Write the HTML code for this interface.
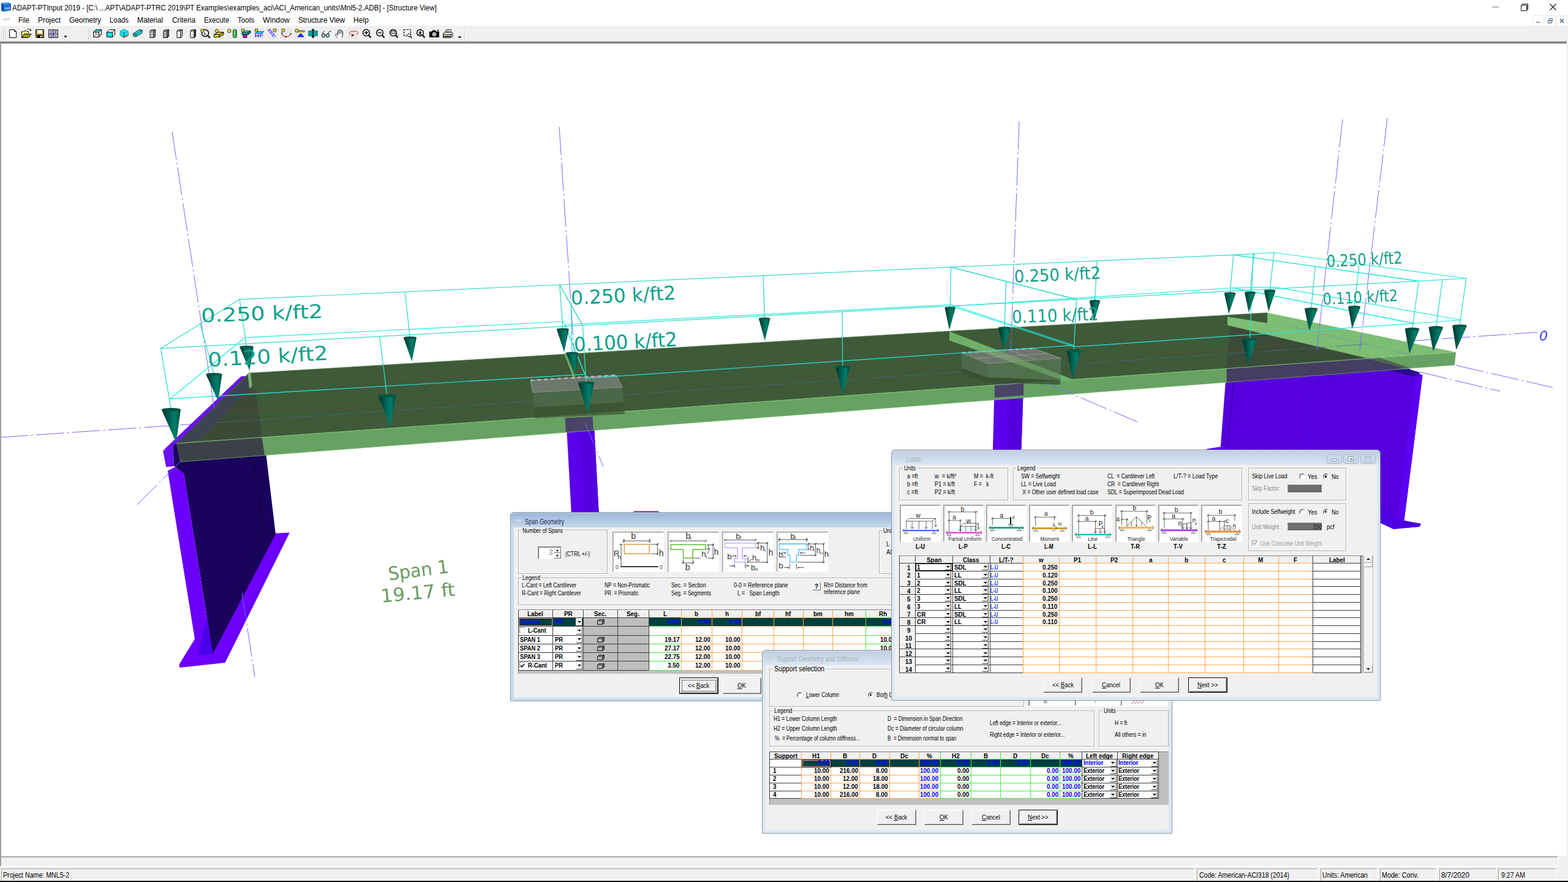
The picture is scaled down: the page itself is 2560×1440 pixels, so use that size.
<!DOCTYPE html>
<html lang="en"><head><meta charset="utf-8"><title>ADAPT-PTInput 2019</title>
<style>
html,body{margin:0;padding:0}
body{width:2560px;height:1440px;overflow:hidden;background:#fff;position:relative;font-family:"Liberation Sans",sans-serif;font-size:11px;color:#000}
.abs{position:absolute}
.t{position:absolute;white-space:pre;line-height:1.18}
u{text-decoration:underline}
</style></head>
<body>
<div class="abs" style="left:0;top:0;width:2560px;height:42px;background:#fff"></div>
<svg class="abs" style="left:1px;top:3px" width="18" height="17" viewBox="0 0 18 17"><path d="M1 2 L13 1 L17 3 L17 14 L5 16 L1 14 Z" fill="#1e6fd0"/><path d="M1 2 L13 1 L17 3 L5 4.5Z" fill="#4d9bf0"/><path d="M1 2L5 4.5L5 16L1 14Z" fill="#0d4fa8"/><text x="7" y="12" font-size="5" fill="#fff" font-family="Liberation Sans, sans-serif">pult</text></svg>
<span class="t " style="left:20px;top:5.5px;font-size:12px;color:#000;transform:scaleX(0.961);transform-origin:0 0;">ADAPT-PTInput 2019 - [C:\ ...APT\ADAPT-PTRC 2019\PT Examples\examples_aci\ACI_American_units\Mnl5-2.ADB] - [Structure View]</span>
<svg class="abs" style="left:2420px;top:0" width="140" height="22" viewBox="0 0 140 22"><path d="M16.5 11.5H27.5" stroke="#777" stroke-width="1"/><path d="M63.5 8.5H72.5V17.5H63.5Z" fill="#fff" stroke="#111" stroke-width="1"/><path d="M65.5 8.5V6.5H74.5V15.5H72.5" fill="none" stroke="#111" stroke-width="1"/><path d="M73 8L74 8L74 15L73 15Z" fill="#999"/><path d="M110.5 6.5L120.5 16.5M120.5 6.5L110.5 16.5" stroke="#111" stroke-width="1.1"/></svg>
<span class="t " style="left:30px;top:25.5px;font-size:12px;color:#000;transform:scaleX(0.931);transform-origin:0 0;">File</span>
<span class="t " style="left:62px;top:25.5px;font-size:12px;color:#000;letter-spacing:-0.05px;">Project</span>
<span class="t " style="left:113px;top:25.5px;font-size:12px;color:#000;letter-spacing:-0.09px;">Geometry</span>
<span class="t " style="left:179px;top:25.5px;font-size:12px;color:#000;transform:scaleX(0.948);transform-origin:0 0;">Loads</span>
<span class="t " style="left:224px;top:25.5px;font-size:12px;color:#000;letter-spacing:-0.08px;">Material</span>
<span class="t " style="left:281px;top:25.5px;font-size:12px;color:#000;letter-spacing:-0.08px;">Criteria</span>
<span class="t " style="left:333px;top:25.5px;font-size:12px;color:#000;transform:scaleX(0.946);transform-origin:0 0;">Execute</span>
<span class="t " style="left:388px;top:25.5px;font-size:12px;color:#000;transform:scaleX(0.964);transform-origin:0 0;">Tools</span>
<span class="t " style="left:429px;top:25.5px;font-size:12px;color:#000;transform:scaleX(1.031);transform-origin:0 0;">Window</span>
<span class="t " style="left:487px;top:25.5px;font-size:12px;color:#000;letter-spacing:-0.13px;">Structure View</span>
<span class="t " style="left:577px;top:25.5px;font-size:12px;color:#000;letter-spacing:0.08px;">Help</span>
<span class="t" style="left:6px;top:28px;font-size:6px;color:#aaa;font-style:italic">pult</span>
<div class="abs" style="left:2503px;top:25px;width:16px;height:16px;border:1px solid #e8e8e8;background:#fff"></div>
<div class="abs" style="left:2522px;top:25px;width:16px;height:16px;border:1px solid #e8e8e8;background:#fff"></div>
<div class="abs" style="left:2541px;top:25px;width:16px;height:16px;border:1px solid #e8e8e8;background:#fff"></div>
<svg class="abs" style="left:2503px;top:25px" width="57" height="18" viewBox="0 0 57 18"><path d="M5 11.5H11" stroke="#6b7c99" stroke-width="1.6"/><path d="M24.5 8.5H29.5V12.5H24.5Z M26.5 8V5.5H31.5V9.5H30" fill="none" stroke="#6b7c99" stroke-width="1.3"/><path d="M44 6L50 12M50 6L44 12" stroke="#6b7c99" stroke-width="1.8"/></svg>
<div class="abs" style="left:0;top:42px;width:2560px;height:26px;background:#f0f0f0"></div>
<div class="abs" style="left:0;top:67px;width:2558px;height:3.500px;background:linear-gradient(#d4d4d4,#909090 40%,#696969 80%,#8a8a8a)"></div>
<div class="abs" style="left:114px;top:44px;width:1px;height:23px;background:#fff"></div><div class="abs" style="left:113px;top:44px;width:1px;height:23px;background:#d8d8d8"></div>
<div class="abs" style="left:759px;top:44px;width:1px;height:23px;background:#fff"></div><div class="abs" style="left:758px;top:44px;width:1px;height:23px;background:#d8d8d8"></div>
<div class="abs" style="left:5px;top:46px;width:1px;height:20px;background:#c6c6c6"></div><div class="abs" style="left:6px;top:46px;width:1px;height:20px;background:#fff"></div><div class="abs" style="left:8px;top:46px;width:1px;height:20px;background:#c6c6c6"></div><div class="abs" style="left:9px;top:46px;width:1px;height:20px;background:#fff"></div>
<div class="abs" style="left:144px;top:46px;width:1px;height:20px;background:#c6c6c6"></div><div class="abs" style="left:145px;top:46px;width:1px;height:20px;background:#fff"></div><div class="abs" style="left:147px;top:46px;width:1px;height:20px;background:#c6c6c6"></div><div class="abs" style="left:148px;top:46px;width:1px;height:20px;background:#fff"></div>
<svg class="abs" style="left:0;top:43px" width="770" height="25" viewBox="0 43 770 25" shape-rendering="auto">
<path d="M15.5 48.5H23.5L26.5 51.5V61.5H15.5Z" fill="#fff" stroke="#000"/><path d="M23.5 48.5V51.5H26.5" fill="none" stroke="#000"/>
<path d="M35.5 61.5V51.5H38L39 50.5H43L44 51.5H46.5V54" fill="#f4f08a" stroke="#000"/><path d="M35.5 61.5L39.5 55.5H51L46.5 61.5Z" fill="#a89a10" stroke="#000"/><path d="M44 48.5C46 46.5 48.5 47 49.5 49.5" fill="none" stroke="#000"/><path d="M48 49L50.5 51L51 47.8Z" fill="#000"/>
<path d="M58.5 48.5H71.5V61.5H59.5L58.5 60.5Z" fill="#9a8c10" stroke="#000"/><rect x="61" y="49" width="8" height="6" fill="#fff"/><rect x="61" y="57" width="8" height="4.5" fill="#000"/><rect x="66" y="58" width="2" height="3" fill="#fff"/>
<rect x="79.5" y="48.5" width="15" height="13" fill="#c8c8c8" stroke="#222"/><path d="M87 48.5V61.5M79.5 55.5H94.5" stroke="#222" stroke-width="1.2"/>
<g font-family="Liberation Sans, sans-serif" font-size="6" font-weight="bold" fill="#1a1aff"><text x="81.5" y="54.3">1</text><text x="89" y="54.3">2</text><text x="81.5" y="61">3</text><text x="89" y="60.5">=</text></g>
<path d="M104 58.5H110L107 61.5Z" fill="#000"/>
<path d="M152.5 52.5H161.5V60.5H152.5Z" fill="#e8e8e8" stroke="#000"/><path d="M152.5 52.5L156.5 48.5H165.5L161.5 52.5Z" fill="#20e0e0" stroke="#000"/><path d="M161.5 52.5L165.5 48.5V56.5L161.5 60.5Z" fill="#e8e8e8" stroke="#000"/><path d="M156.5 48.5V56.5H165.5M156.5 56.5L152.5 60.5" fill="none" stroke="#555" stroke-width=".8"/>
<path d="M174.5 52.5H183.5V60.5H174.5Z" fill="#20e0e0" stroke="#000"/><path d="M174.5 52.5L178.5 48.5H187.5L183.5 52.5Z" fill="#fff" stroke="#000"/><path d="M183.5 52.5L187.5 48.5V56.5L183.5 60.5Z" fill="#fff" stroke="#000"/>
<path d="M202.500 47.500L209.400 51.200V57.500L202.500 61.200L196 57.500V51.200Z" fill="#18e4e4" stroke="#0a9a9a" stroke-width=".8"/><path d="M202.500 53.800V61" stroke="#1a1aff" stroke-width="1.300"/><path d="M202.500 53.800L196 51.200M202.500 53.800L209.400 51.200" stroke="#0a9a9a" stroke-width=".8"/><path d="M196 57.600L202.500 61.300" stroke="#10c010" stroke-width="1.200"/><path d="M209.400 57.600L202.500 61.300" stroke="#e01010" stroke-width="1.200"/>
<path d="M217.500 55L227.500 48.200L231.900 49.400V53.800L221.900 60L217.500 58.800Z" fill="#18e4e4" stroke="#000" stroke-width=".9"/><path d="M217.500 55L221.900 56.200V60M221.900 56.200L231.900 49.400" fill="none" stroke="#000" stroke-width=".9"/>
<path d="M245.0 50.5H251.0V61.5H245.0Z" fill="#fff" stroke="#000"/><path d="M245.0 50.5L247.5 48.5H253.5L251.0 50.5Z" fill="#fff" stroke="#000"/><path d="M251.0 50.5L253.5 48.5V59.5L251.0 61.5Z" fill="#aaa" stroke="#000"/>
<path d="M247 52.5H249V59.5H247Z" fill="none" stroke="#555" stroke-width=".8"/>
<path d="M267.0 50.5H273.0V61.5H267.0Z" fill="#b0b0b0" stroke="#000"/><path d="M267.0 50.5L269.5 48.5H275.5L273.0 50.5Z" fill="#fff" stroke="#000"/><path d="M273.0 50.5L275.5 48.5V59.5L273.0 61.5Z" fill="#888" stroke="#000"/>
<path d="M289.0 50.5H295.0V61.5H289.0Z" fill="#fff" stroke="#000"/><path d="M289.0 50.5L291.5 48.5H297.5L295.0 50.5Z" fill="#fff" stroke="#000"/><path d="M295.0 50.5L297.5 48.5V59.5L295.0 61.5Z" fill="#fff" stroke="#000"/>
<path d="M311.0 50.5H317.0V61.5H311.0Z" fill="#fff" stroke="#000"/><path d="M311.0 50.5L313.5 48.5H319.5L317.0 50.5Z" fill="#fff" stroke="#000"/><path d="M317.0 50.5L319.5 48.5V59.5L317.0 61.5Z" fill="#555" stroke="#000"/>
<rect x="326" y="46" width="18" height="17" fill="#e2e2e2" opacity=".55"/>
<rect x="348" y="46" width="18" height="17" fill="#e2e2e2" opacity=".55"/>
<rect x="370" y="46" width="18" height="17" fill="#e2e2e2" opacity=".55"/>
<rect x="392" y="46" width="18" height="17" fill="#e2e2e2" opacity=".55"/>
<rect x="414" y="46" width="18" height="17" fill="#e2e2e2" opacity=".55"/>
<rect x="436" y="46" width="18" height="17" fill="#e2e2e2" opacity=".55"/>
<rect x="458" y="46" width="18" height="17" fill="#e2e2e2" opacity=".55"/>
<rect x="480" y="46" width="18" height="17" fill="#e2e2e2" opacity=".55"/>
<rect x="568" y="46" width="18" height="17" fill="#e2e2e2" opacity=".55"/>
<circle cx="335" cy="54" r="5.5" fill="#fff" stroke="#000" stroke-width="1.6"/><path d="M339 58L343 62" stroke="#000" stroke-width="2"/><circle cx="330.5" cy="50" r="2.6" fill="#f4ec1a" stroke="#111" stroke-width=".9"/><path d="M334 52V56H337" fill="none" stroke="#000"/>
<path d="M349.5 56.5L357 52.5H365L358 56.5Z" fill="#f4e81a" stroke="#000"/><path d="M349.5 56.5H358V60.5H349.5Z" fill="#f4e81a" stroke="#000"/><path d="M358 56.5L365 52.5V56.5L358 60.5Z" fill="#c8b810" stroke="#000"/><circle cx="354" cy="50.5" r="2.6" fill="#f4ec1a" stroke="#111" stroke-width=".9"/>
<rect x="380.600" y="48.500" width="5.600" height="12.800" rx="1.800" fill="#5ce070" stroke="#000" stroke-width=".9"/><path d="M384.500 50V60" stroke="#208a30" stroke-width="1"/><circle cx="374.400" cy="50.600" r="2.700" fill="#f4ec1a" stroke="#111" stroke-width=".9"/>
<path d="M395 53.5L399 50.5H409L405 53.5Z" fill="#20e0e0" stroke="#000" stroke-width=".8"/><path d="M395 53.5H405V56.5H395Z" fill="#1ab0b0" stroke="#000" stroke-width=".8"/><path d="M405 53.5L409 50.5V53.5L405 56.5Z" fill="#0a8080" stroke="#000" stroke-width=".8"/><rect x="397" y="57" width="6" height="4.5" fill="#d010d0" stroke="#000" stroke-width=".8"/><circle cx="396.5" cy="49.5" r="2.4" fill="#f4ec1a" stroke="#111" stroke-width=".9"/>
<path d="M416 54.5L421 51.5H431L426 54.5Z" fill="#20e0e0" stroke="#1a1aff" stroke-width=".8"/><path d="M417.5 55V61M421.5 55V61M425.5 55V61M416 58.5H426M428 53V59" stroke="#1a1aff" stroke-width="1"/><circle cx="418.5" cy="49.5" r="2.4" fill="#f4ec1a" stroke="#111" stroke-width=".9"/>
<path d="M437 48L447 61M440 47L450 60M438.5 50L441.5 48M441.5 54L444.5 52M444.5 58L447.5 56" stroke="#1a1aff" stroke-width="1"/><circle cx="448.5" cy="49.5" r="2.6" fill="#f4ec1a" stroke="#111" stroke-width=".9"/>
<path d="M460 54C463 62 471 62 475 55" fill="none" stroke="#d02010" stroke-width="1.1"/><circle cx="462.5" cy="49.5" r="2.6" fill="#f4ec1a" stroke="#111" stroke-width=".9"/><circle cx="460" cy="54" r="1" fill="#000"/><circle cx="467" cy="60" r="1" fill="#000"/><circle cx="475" cy="55" r="1" fill="#000"/>
<path d="M486 50.5H498" stroke="#222" stroke-width="1.2"/><path d="M484 52.5H498" stroke="#c8a800" stroke-width="1"/><path d="M491 54L497 60.5H485Z" fill="#1a1aff"/><circle cx="484.5" cy="50" r="2.6" fill="#f4ec1a" stroke="#111" stroke-width=".9"/>
<rect x="503" y="50" width="16" height="9" fill="#109090"/><path d="M503 53H519M503 56H519" stroke="#20c0c0" stroke-width=".7"/><path d="M511 46.5L514 50H508Z M511 62.5L514 59H508Z" fill="#000"/><path d="M511 49V60" stroke="#000" stroke-width="1.4"/>
<circle cx="528" cy="58" r="2.8" fill="#9ef0f0" stroke="#000"/><circle cx="535" cy="58" r="2.8" fill="#9ef0f0" stroke="#000"/><path d="M526 56L529 50.5M536 55.5C536 51 540 50 541 52" fill="none" stroke="#000"/>
<path d="M550.5 61.5C548 58 547 56 548.5 55.5C550 55 550.5 56.5 551.5 57.5V50.5C551.5 49 553.5 49 553.5 50.5V49.5C553.5 48 555.5 48 555.5 49.5V50C555.5 48.7 557.5 48.7 557.5 50.2V51.5C557.5 50.2 559.5 50.4 559.5 52V57C559.5 59 558.5 60 558 61.5" fill="#fff" stroke="#000" stroke-width=".9"/><path d="M553.5 50.5V55M555.5 50V55M557.5 51.5V55" stroke="#000" stroke-width=".7"/>
<path d="M572 57C568 54 572 51 578 51C584 51 587 54 582 56.5" fill="none" stroke="#d02010" stroke-width="1"/><path d="M574 55L579 57.5L574 60Z" fill="#a01010"/>
<circle cx="598" cy="53.5" r="5.3" fill="#fff" stroke="#000" stroke-width="1.5"/><path d="M602 57.5L605.5 61.5" stroke="#000" stroke-width="2"/>
<path d="M595 53.5H601M598 50.5V56.5" stroke="#000" stroke-width="1.5"/>
<circle cx="620" cy="53.5" r="5.3" fill="#fff" stroke="#000" stroke-width="1.5"/><path d="M624 57.5L627.5 61.5" stroke="#000" stroke-width="2"/>
<path d="M617 53.5H623" stroke="#000" stroke-width="1.5"/>
<circle cx="642" cy="53.5" r="5.3" fill="#fff" stroke="#000" stroke-width="1.5"/><path d="M646 57.5L649.5 61.5" stroke="#000" stroke-width="2"/>
<rect x="639" y="50.5" width="6" height="4" fill="#ddd" stroke="#000" stroke-width=".8"/>
<path d="M659.5 48.500H670.5V58.5H659.5Z" fill="none" stroke="#000" stroke-width="1.2" stroke-dasharray="3 1.5"/><circle cx="668" cy="57.500" r="2.5" fill="#fff" stroke="#000"/><path d="M670 59.5L672.5 62" stroke="#000" stroke-width="1.6"/>
<circle cx="686" cy="53.5" r="5.3" fill="#fff" stroke="#000" stroke-width="1.5"/><path d="M690 57.5L693.5 61.5" stroke="#000" stroke-width="2"/>
<path d="M686 49.500V54.5M683.800 52.5L686 55L688.200 52.5M683 56.500H689" stroke="#000" stroke-width="1.2" fill="none"/>
<path d="M701 51.500H705L706 49.500H711L712 51.500H717V61H701Z" fill="#000"/><circle cx="709" cy="56" r="3" fill="#aaa" stroke="#fff" stroke-width=".8"/><rect x="714" y="48.500" width="2" height="2" fill="#000"/>
<path d="M726.5 53.5L728.500 48.500H736.500L735.500 53.500Z" fill="#fff" stroke="#000" stroke-width=".8"/><path d="M728.5 50H734M728 51.500H734" stroke="#555" stroke-width=".6"/><path d="M723.500 54.5L726.500 52.5H737.500L739 54.500V59L736 61.500H723.500Z" fill="#d8d8d8" stroke="#000" stroke-width=".9"/><path d="M723.500 56.500H736L739 54.5M736 56.500V61.500" fill="none" stroke="#000" stroke-width=".8"/><rect x="728" y="57.500" width="3" height="1.300" fill="#d8c010"/><path d="M724 59.500H735.500" stroke="#000" stroke-width="1.5"/>
<path d="M747.5 59.500H753.500L750.500 62.500Z" fill="#000"/>
</svg>
<div class="abs" style="left:0;top:70px;width:2px;height:1344px;background:#a0a0a0;z-index:2"></div>
<div class="abs" style="left:0;top:1397px;width:2560px;height:43px;background:#f0f0f0"></div>
<div class="abs" style="left:2px;top:1398.400px;width:2541px;height:1.600px;background:#adadad"></div>
<div class="abs" style="left:2543px;top:1398px;width:2px;height:16px;background:#fbfbfb"></div>
<div class="abs" style="left:0;top:1412.500px;width:2545px;height:2px;background:#fbfbfb"></div>
<div class="abs" style="left:2558px;top:71px;width:1px;height:1327px;background:#e9e9e9"></div><div class="abs" style="left:2559px;top:68px;width:1px;height:1330px;background:#f4f4f4"></div>
<div class="abs" style="left:0;top:1438px;width:2560px;height:2px;background:#1a1a1a"></div>
<div class="abs" style="left:2px;top:1417.500px;width:1948px;height:20.500px;box-sizing:border-box;border-left:1px solid #a0a0a0;border-top:1px solid #a0a0a0;border-right:1px solid #fff"></div>
<div class="abs" style="left:1954px;top:1417.500px;width:197px;height:20.500px;box-sizing:border-box;border-left:1px solid #a0a0a0;border-top:1px solid #a0a0a0;border-right:1px solid #fff"></div>
<div class="abs" style="left:2155.5px;top:1417.500px;width:93.0px;height:20.500px;box-sizing:border-box;border-left:1px solid #a0a0a0;border-top:1px solid #a0a0a0;border-right:1px solid #fff"></div>
<div class="abs" style="left:2252.5px;top:1417.500px;width:92.5px;height:20.500px;box-sizing:border-box;border-left:1px solid #a0a0a0;border-top:1px solid #a0a0a0;border-right:1px solid #fff"></div>
<div class="abs" style="left:2349.5px;top:1417.500px;width:93.0px;height:20.500px;box-sizing:border-box;border-left:1px solid #a0a0a0;border-top:1px solid #a0a0a0;border-right:1px solid #fff"></div>
<div class="abs" style="left:2446px;top:1417.500px;width:94px;height:20.500px;box-sizing:border-box;border-left:1px solid #a0a0a0;border-top:1px solid #a0a0a0;border-right:1px solid #fff"></div>
<span class="t " style="left:4.5px;top:1421.5px;font-size:12.5px;color:#000;transform:scaleX(0.850);transform-origin:0 0;">Project Name: MNL5-2</span>
<span class="t " style="left:1958px;top:1421.5px;font-size:12.5px;color:#000;transform:scaleX(0.843);transform-origin:0 0;">Code: American-ACI318 (2014)</span>
<span class="t " style="left:2159px;top:1421.5px;font-size:12.5px;color:#000;transform:scaleX(0.845);transform-origin:0 0;">Units: American</span>
<span class="t " style="left:2256px;top:1421.5px;font-size:12.5px;color:#000;transform:scaleX(0.858);transform-origin:0 0;">Mode: Conv.</span>
<span class="t " style="left:2353px;top:1421.5px;font-size:12.5px;color:#000;transform:scaleX(0.945);transform-origin:0 0;">8/7/2020</span>
<span class="t " style="left:2450.5px;top:1421.5px;font-size:12.5px;color:#000;transform:scaleX(0.850);transform-origin:0 0;">9:27 AM</span>
<svg class="abs" style="left:0;top:0" width="2560" height="1440" viewBox="0 0 2560 1440">
<defs><linearGradient id="cg" x1="0" x2="1" y1="0" y2="0"><stop offset="0" stop-color="#003028"/><stop offset=".5" stop-color="#006c5c"/><stop offset=".72" stop-color="#007e6a"/><stop offset="1" stop-color="#00463a"/></linearGradient><linearGradient id="cgd" x1="0" x2="1" y1="0" y2="0"><stop offset="0" stop-color="#002822"/><stop offset=".55" stop-color="#005548"/><stop offset="1" stop-color="#002a24"/></linearGradient></defs>
<line x1="0" y1="714" x2="2510" y2="542.5" stroke="#6a6aff" stroke-width="1" stroke-dasharray="46 5 3 5"/>
<polygon points="293,1084 293,1090 367.5,1082 473,869.5 423,872" fill="#6e00ff" />
<polyline points="296,1084 366,1078 469,871" fill="none" stroke="#3a00a0" stroke-width="0.7" />
<polygon points="284,726 434,738 450,872 347.5,1067.5 300,773 285,762" fill="#1a035c" />
<polygon points="273.8,768.8 285,762.5 300,772.5 347.5,1067.5 322.5,1071.2" fill="#6a00fa" />
<polygon points="322.5,1071 347.5,1067.5 345,1050 337,1013" fill="#4a00e8" />
<polyline points="413.8,746 431.5,872 344,1050" fill="none" stroke="#0c0238" stroke-width="0.8" />
<polyline points="418,874 450,872" fill="none" stroke="#0c0238" stroke-width="0.8" />
<polygon points="266.2,736.2 282.5,725 283.8,761.2 271.2,762.5" fill="#6a10f5" />
<polygon points="282.5,725 293,723 294,754 283.8,761.2" fill="#1c0560" />
<polygon points="393.5,614.5 405,613.6 288,724 266.2,735.4" fill="#6a10f5" />
<polygon points="923.8,675 968.8,673.8 977.6,836 932.7,836" fill="#5a00ea" />
<polygon points="946.2,675 968.8,673.8 977.6,836 955,836" fill="#5200e0" />
<polygon points="1623.8,626.2 1671.2,623.8 1667.4,736 1620.9,736" fill="#5a00ea" />
<polygon points="1650,626.2 1671.2,623.8 1667.4,736 1645,736" fill="#5200e0" />
<polygon points="2002.6,601 2296,600 2322.5,612.5 2292.5,850 2320,855 2317.5,860 2275,863.8 2250,852 2250,740 1992,740" fill="#5500dd" />
<polygon points="2310,615 2322.5,612.5 2292.5,850 2281,846" fill="#5c00f2" />
<polygon points="2250,828 2281,846 2292.5,850 2320,855 2317.5,860 2275,863.8 2250,852" fill="#5000e6" />
<polyline points="2253,836 2278,850 2308,856" fill="none" stroke="#3000a0" stroke-width="0.7" />
<polyline points="2014,625 2004,736" fill="none" stroke="#2a0080" stroke-width="0.8" />
<polyline points="2145,615 2132,740" fill="none" stroke="#4a10e8" stroke-width="0.8" />
<polygon points="1970,733 1995,729 2010,732 2010,740 1970,740" fill="#5a00f0" />
<polygon points="406,609 1550,540.5 2069,510.5 2069,527.5 2230,584.6 2377,575 288,724" fill="#3e5a38" />
<polygon points="288,724 2377,575 2375,596 294,754" fill="#67a262" />
<polygon points="2004,517 2069,527.5 2069,510.5 2377,575 2230,584.6 2004,531" fill="#7dbd74" />
<polygon points="921,577.3 924.5,576.6 940.5,619 937,620" fill="#6aa864" />
<polygon points="1550,541 1750,619 1734,620.5 1550,556" fill="#6fae68" />
<polygon points="404.4,613.5 407.2,634.4 328,718.5 288,724" fill="#3d4350" />
<polygon points="407.2,634.4 417,636 427.4,710.8 420,714.5 328,720.6" fill="#3b4a37" />
<polygon points="288,724 427.4,714 432.2,743.5 294,754" fill="#3b4146" />
<polygon points="404.4,609.4 409.3,608.5 411.4,630.3 407.2,634.4" fill="#7ab870" />
<polygon points="922.5,682.5 967.5,680 968.8,703 923.8,705.5" fill="#4a4468" />
<polygon points="1623.8,626.2 1671.2,623.8 1671.2,645.5 1623.8,649.2" fill="#4a4468" />
<polygon points="2002.6,601.5 2230,584.6 2294,601 2266,604.6 2002.6,624.6" fill="#463d62" />
<polygon points="2010,533 2230,584.6 2002.6,601.5 2005,560" fill="#3a4c38" />
<polygon points="2230,584.6 2294,601 2302,600.5 2250,583.5" fill="#4d6650" />
<polygon points="2266.5,604.6 2297.8,602 2318.6,608 2310,615" fill="#2a0a90" />
<line x1="406" y1="609" x2="1550" y2="540.5" stroke="#6d9c66" stroke-width="0.8" />
<line x1="1550" y1="540.5" x2="2069" y2="510.5" stroke="#6d9c66" stroke-width="0.8" />
<polygon points="1035,834.5 1075,834.5 1076,836.5 1034,836.5" fill="#6a10f5" />
<line x1="288" y1="724" x2="2377" y2="575" stroke="#7fc878" stroke-width="1" />
<line x1="294" y1="754" x2="2375" y2="596" stroke="#84d07c" stroke-width="0.8" opacity=".7"/>
<line x1="355" y1="690" x2="2230" y2="562" stroke="#4a6a8a" stroke-width="1" stroke-dasharray="46 5 3 5" opacity=".8"/>
<polyline points="355,666 415,668.5 475,668.8 550,667.5 625,665 730,657 840,647.5 870,641 940,631 1017,626 1100,623.5 1200,621 1300,618.5 1400,614.5 1460,608 1512,600 1575,592.5 1650,588 1732,585 1820,582 1900,578 1980,573.5 2040,570 2100,560" fill="none" stroke="#8a4030" stroke-width="0.8" opacity=".6" stroke-linejoin="round"/>
<polygon points="866,621 1006,612.5 1016,632.5 870,641" fill="#7b7f7b" opacity=".78"/>
<polyline points="866,621 1006,612.5 1016,632.5 870,641 866,621" fill="none" stroke="#a8a8a8" stroke-width="0.8" />
<path d="M866 621L1006 612.500" stroke="#b8b8b8" stroke-width="2.5" stroke-dasharray="6 5"/>
<polygon points="870,641 1016,632.5 1018,657 872,665" fill="#506c4d" opacity=".7"/>
<polygon points="872,665 1018,657 1020,676 873,683" fill="#3a5335" opacity=".7"/>
<polygon points="1570,576 1687.5,568.8 1732.5,585 1612.5,593.8" fill="#7b7f7b" opacity=".78"/>
<path d="M1570 576L1687.500 568.800" stroke="#b0b0b0" stroke-width="2.500" stroke-dasharray="6 5"/>
<polyline points="1570,576 1687.5,568.8 1732.5,585 1612.5,593.8 1570,576" fill="none" stroke="#a8a8a8" stroke-width="0.8" />
<polyline points="1609,573.6 1652,589.5" fill="none" stroke="#a0a0a0" stroke-width="0.7" />
<polyline points="1648,571.2 1692,587.5" fill="none" stroke="#a0a0a0" stroke-width="0.7" />
<polyline points="1591,585 1710,577" fill="none" stroke="#a0a0a0" stroke-width="0.7" />
<polygon points="1570,576 1612.5,593.8 1611,616 1570,601" fill="#536f50" opacity=".75"/>
<polygon points="1612.5,593.8 1732.5,585 1731,621 1611,616" fill="#5a7856" opacity=".75"/>
<polygon points="1570,601 1611,616 1731,621 1731,628 1611,624 1570,610" fill="#36502f" opacity=".8"/>
<polygon points="1573,550.5 1750,619 1734,620.5 1573,563.5" fill="#74b46c" opacity=".38"/>
<line x1="281" y1="215" x2="350" y2="668" stroke="#6a6aff" stroke-width="1" stroke-dasharray="46 5 3 5"/>
<line x1="395" y1="968" x2="416" y2="1105" stroke="#6a6aff" stroke-width="1" stroke-dasharray="46 5 3 5"/>
<line x1="913" y1="207" x2="939" y2="600" stroke="#6a6aff" stroke-width="1" stroke-dasharray="46 5 3 5"/>
<line x1="955" y1="690" x2="985" y2="762" stroke="#6a6aff" stroke-width="1" stroke-dasharray="46 5 3 5"/>
<line x1="1664" y1="198" x2="1650" y2="577" stroke="#6a6aff" stroke-width="1" stroke-dasharray="46 5 3 5"/>
<line x1="1710" y1="626" x2="1857.5" y2="689" stroke="#6a6aff" stroke-width="1" stroke-dasharray="46 5 3 5"/>
<line x1="2192" y1="195" x2="2150" y2="572" stroke="#6a6aff" stroke-width="1" stroke-dasharray="46 5 3 5"/>
<line x1="2265" y1="193" x2="2220" y2="572.5" stroke="#6a6aff" stroke-width="1" stroke-dasharray="46 5 3 5"/>
<line x1="224" y1="824" x2="300" y2="748" stroke="#6a6aff" stroke-width="1" stroke-dasharray="46 5 3 5"/>
<line x1="2377" y1="596.5" x2="2535" y2="632.6" stroke="#6a6aff" stroke-width="1" stroke-dasharray="46 5 3 5"/>
<line x1="2100" y1="531" x2="2377" y2="596.5" stroke="#6f8fb0" stroke-width="1" stroke-dasharray="46 5 3 5" opacity=".75"/>
<line x1="2318" y1="607.3" x2="2449" y2="638.8" stroke="#6a6aff" stroke-width="1" stroke-dasharray="46 5 3 5"/>
<text x="2513" y="556" font-family="DejaVu Sans, sans-serif" font-style="italic" font-size="22" fill="#3a3aff" textLength="14" lengthAdjust="spacingAndGlyphs">0</text>
<g stroke-linecap="round">
<polygon points="391.2,488.8 913.8,465 951.2,531.2 262.5,568.8" fill="none" stroke="#33dcc6" stroke-width="1.2"/>
<polygon points="913.8,465 1552.5,436.2 1757.5,488.8 951.2,531.2" fill="none" stroke="#33dcc6" stroke-width="1.2"/>
<polygon points="1552.5,436.2 2013.8,416.2 2316.2,458.8 1757.5,488.8" fill="none" stroke="#33dcc6" stroke-width="1.2"/>
<polygon points="2013.8,416.2 2080,412.5 2393.8,454.5 2316.2,458.8" fill="none" stroke="#22e8e0" stroke-width="1.2"/>
<polygon points="400,551.2 920,525 955,611.2 277.5,651.2" fill="none" stroke="#22e8e0" stroke-width="1.2"/>
<polygon points="922.5,530 1552.5,497.5 1752.5,563.8 957.5,617.5" fill="none" stroke="#22e8e0" stroke-width="1.2"/>
<polygon points="1553.8,500 2012.5,470 2308.8,528 1753.8,566.2" fill="none" stroke="#22e8e0" stroke-width="1.2"/>
<polygon points="2012.5,470 2082.5,468.8 2386.2,522.5 2308.8,528" fill="none" stroke="#22e8e0" stroke-width="1.2"/>
<line x1="262.5" y1="568.8" x2="279.4" y2="668.8" stroke="#33dcc6" stroke-width="1.3"/>
<line x1="326.8" y1="528.8" x2="349.35" y2="611.2" stroke="#33dcc6" stroke-width="1.3"/>
<line x1="391.2" y1="488.8" x2="402.5" y2="566.2" stroke="#33dcc6" stroke-width="1.3"/>
<line x1="620" y1="550" x2="631.85" y2="646.2" stroke="#33dcc6" stroke-width="1.3"/>
<line x1="661.2" y1="477.5" x2="669.4" y2="551.2" stroke="#33dcc6" stroke-width="1.3"/>
<line x1="913.8" y1="465" x2="918.8" y2="537.5" stroke="#33dcc6" stroke-width="1.3"/>
<line x1="932.5" y1="498" x2="933.8" y2="576.2" stroke="#33dcc6" stroke-width="1.3"/>
<line x1="951.2" y1="531.2" x2="956.9" y2="625" stroke="#33dcc6" stroke-width="1.3"/>
<line x1="1246.2" y1="450" x2="1248.15" y2="520" stroke="#33dcc6" stroke-width="1.3"/>
<line x1="1375" y1="510" x2="1375.65" y2="598.8" stroke="#33dcc6" stroke-width="1.3"/>
<line x1="1552.5" y1="436.2" x2="1551.25" y2="502.5" stroke="#33dcc6" stroke-width="1.3"/>
<line x1="1642.5" y1="460" x2="1640" y2="535" stroke="#33dcc6" stroke-width="1.3"/>
<line x1="1757.5" y1="488.8" x2="1753.1" y2="572.5" stroke="#33dcc6" stroke-width="1.3"/>
<line x1="1791.2" y1="426.2" x2="1787.5" y2="491.2" stroke="#33dcc6" stroke-width="1.3"/>
<line x1="2013.8" y1="416.2" x2="2008.15" y2="478.8" stroke="#33dcc6" stroke-width="1.3"/>
<line x1="2047.5" y1="413.8" x2="2041" y2="477.5" stroke="#33dcc6" stroke-width="1.3"/>
<line x1="2080" y1="412.5" x2="2073.15" y2="474.5" stroke="#33dcc6" stroke-width="1.3"/>
<line x1="2147.5" y1="435" x2="2140.6" y2="504.2" stroke="#33dcc6" stroke-width="1.3"/>
<line x1="2218.8" y1="433.8" x2="2211.2" y2="500.8" stroke="#33dcc6" stroke-width="1.3"/>
<line x1="2316.2" y1="458.8" x2="2305.65" y2="537" stroke="#33dcc6" stroke-width="1.3"/>
<line x1="2355" y1="456.2" x2="2344.35" y2="534.5" stroke="#33dcc6" stroke-width="1.3"/>
<line x1="2393.8" y1="454.5" x2="2383.1" y2="531.8" stroke="#33dcc6" stroke-width="1.3"/>
<line x1="2046.2" y1="415" x2="2040.65" y2="553.8" stroke="#33dcc6" stroke-width="1.3"/>
<path d="M263.8 668.8L287.5 722.5L295 668.8Z" fill="url(#cg)"/>
<ellipse cx="279.4" cy="668.8" rx="15.6" ry="2.808" fill="#005446"/>
<path d="M336.2 611.2L356.2 655L362.5 611.2Z" fill="url(#cg)"/>
<ellipse cx="349.35" cy="611.2" rx="13.15" ry="2.367" fill="#005446"/>
<path d="M391.2 566.2L407.5 605L413.8 566.2Z" fill="url(#cg)"/>
<ellipse cx="402.5" cy="566.2" rx="11.3" ry="2.034" fill="#005446"/>
<path d="M617.5 646.2L637.5 697.5L646.2 646.2Z" fill="url(#cg)"/>
<ellipse cx="631.85" cy="646.2" rx="14.35" ry="2.583" fill="#005446"/>
<path d="M658.8 551.2L672.5 590L680 551.2Z" fill="url(#cg)"/>
<ellipse cx="669.4" cy="551.2" rx="10.6" ry="1.908" fill="#005446"/>
<path d="M908.8 537.5L921.2 575L928.8 537.5Z" fill="url(#cg)"/>
<ellipse cx="918.8" cy="537.5" rx="10" ry="1.8" fill="#005446"/>
<path d="M923.8 576.2L940 610L943.8 576.2Z" fill="url(#cg)"/>
<ellipse cx="933.8" cy="576.2" rx="10" ry="1.8" fill="#005446"/>
<path d="M943.8 625L960 675L970 625Z" fill="url(#cg)"/>
<ellipse cx="956.9" cy="625" rx="13.1" ry="2.358" fill="#005446"/>
<path d="M1238.8 520L1248.8 556.2L1257.5 520Z" fill="url(#cg)"/>
<ellipse cx="1248.15" cy="520" rx="9.35" ry="1.683" fill="#005446"/>
<path d="M1363.8 598.8L1376.2 643.8L1387.5 598.8Z" fill="url(#cg)"/>
<ellipse cx="1375.65" cy="598.8" rx="11.85" ry="2.133" fill="#005446"/>
<path d="M1542.5 502.5L1550 538.8L1560 502.5Z" fill="url(#cg)"/>
<ellipse cx="1551.25" cy="502.5" rx="8.75" ry="1.6" fill="#005446"/>
<path d="M1630 535L1638.8 572.5L1650 535Z" fill="url(#cg)"/>
<ellipse cx="1640" cy="535" rx="10" ry="1.8" fill="#005446"/>
<path d="M1741.2 572.5L1751.2 617.5L1765 572.5Z" fill="url(#cg)"/>
<ellipse cx="1753.1" cy="572.5" rx="11.9" ry="2.142" fill="#005446"/>
<path d="M1778.8 491.2L1786.2 525L1796.2 491.2Z" fill="url(#cg)"/>
<ellipse cx="1787.5" cy="491.2" rx="8.7" ry="1.6" fill="#005446"/>
<path d="M1998.8 478.8L2006.2 512.5L2017.5 478.8Z" fill="url(#cg)"/>
<ellipse cx="2008.15" cy="478.8" rx="9.35" ry="1.683" fill="#005446"/>
<path d="M2032 477.5L2038.8 510L2050 477.5Z" fill="url(#cg)"/>
<ellipse cx="2041" cy="477.5" rx="9" ry="1.62" fill="#005446"/>
<path d="M2063.8 474.5L2071.2 508.8L2082.5 474.5Z" fill="url(#cg)"/>
<ellipse cx="2073.15" cy="474.5" rx="9.35" ry="1.683" fill="#005446"/>
<path d="M2130 504.2L2137.5 540L2151.2 504.2Z" fill="url(#cg)"/>
<ellipse cx="2140.6" cy="504.2" rx="10.6" ry="1.908" fill="#005446"/>
<path d="M2201.2 500.8L2207.5 536.2L2221.2 500.8Z" fill="url(#cg)"/>
<ellipse cx="2211.2" cy="500.8" rx="10" ry="1.8" fill="#005446"/>
<path d="M2293.8 537L2301.2 577.5L2317.5 537Z" fill="url(#cg)"/>
<ellipse cx="2305.65" cy="537" rx="11.85" ry="2.133" fill="#005446"/>
<path d="M2332.5 534.5L2340 573.8L2356.2 534.5Z" fill="url(#cg)"/>
<ellipse cx="2344.35" cy="534.5" rx="11.85" ry="2.133" fill="#005446"/>
<path d="M2371.2 531.8L2377.5 571.2L2395 531.8Z" fill="url(#cg)"/>
<ellipse cx="2383.1" cy="531.8" rx="11.9" ry="2.142" fill="#005446"/>
<path d="M2028.8 553.8L2037 595L2052.5 553.8Z" fill="url(#cg)"/>
<ellipse cx="2040.65" cy="553.8" rx="11.85" ry="2.133" fill="#005446"/>
</g>
<text transform="translate(328.8 526.2) rotate(-2.13)" font-family="DejaVu Sans, sans-serif" font-size="31" fill="#10a08c" textLength="198.8" lengthAdjust="spacingAndGlyphs">0.250 k/ft2</text>
<text transform="translate(340 598.8) rotate(-3.30)" font-family="DejaVu Sans, sans-serif" font-size="32" fill="#10a08c" textLength="196.5" lengthAdjust="spacingAndGlyphs">0.120 k/ft2</text>
<text transform="translate(932.5 497.5) rotate(-2.91)" font-family="DejaVu Sans, sans-serif" font-size="31" fill="#10a08c" textLength="171.5" lengthAdjust="spacingAndGlyphs">0.250 k/ft2</text>
<text transform="translate(937.5 573.8) rotate(-2.99)" font-family="DejaVu Sans, sans-serif" font-size="32" fill="#10a08c" textLength="168.9" lengthAdjust="spacingAndGlyphs">0.100 k/ft2</text>
<text transform="translate(1656.2 461.2) rotate(-2.51)" font-family="DejaVu Sans, sans-serif" font-size="27.5" fill="#10a08c" textLength="141.4" lengthAdjust="spacingAndGlyphs">0.250 k/ft2</text>
<text transform="translate(1652.5 527.5) rotate(-2.03)" font-family="DejaVu Sans, sans-serif" font-size="28.5" fill="#10a08c" textLength="141.4" lengthAdjust="spacingAndGlyphs">0.110 k/ft2</text>
<text transform="translate(2166.2 436.2) rotate(-2.87)" font-family="DejaVu Sans, sans-serif" font-size="27" fill="#10a08c" textLength="124.0" lengthAdjust="spacingAndGlyphs">0.250 k/ft2</text>
<text transform="translate(2160 497.5) rotate(-2.94)" font-family="DejaVu Sans, sans-serif" font-size="26" fill="#10a08c" textLength="122.7" lengthAdjust="spacingAndGlyphs">0.110 k/ft2</text>
<text transform="translate(635 947.5) rotate(-7.21)" font-family="DejaVu Sans, sans-serif" font-size="30" fill="#6b9a63" textLength="99.5" lengthAdjust="spacingAndGlyphs">Span 1</text>
<text transform="translate(622.5 983.75) rotate(-5.30)" font-family="DejaVu Sans, sans-serif" font-size="30" fill="#6b9a63" textLength="121.8" lengthAdjust="spacingAndGlyphs">19.17 ft</text>
</svg>
<div class="abs" style="left:833px;top:836px;width:700px;height:309px;box-sizing:border-box;border:1px solid #8d979f;border-radius:6px 6px 1px 1px;background:linear-gradient(#9ab6d6,#c9dcf0 26px,#c9dcf0);box-shadow:inset 0 1px 0 rgba(255,255,255,.35)"></div>
<div class="abs" style="left:839px;top:861px;width:688px;height:278px;background:#f0f0f0"></div>
<span class="t" style="left:842px;top:846px;font-size:6px;font-style:italic;color:#e8eef6;letter-spacing:-.3px">pult</span>
<span class="t " style="left:857px;top:844.5px;font-size:12px;color:#1e2f55;transform:scaleX(0.762);transform-origin:0 0;">Span Geometry</span>
<div class="abs" style="left:839px;top:861px;width:688px;height:278px;overflow:hidden"><div class="abs" style="left:-839px;top:-861px;width:2560px;height:1440px"><div class="abs" style="left:847px;top:866.4px;width:146px;height:71.60000000000002px;box-sizing:border-box;border:1px solid #fff"></div>
<div class="abs" style="left:846px;top:865.4px;width:146px;height:71.60000000000002px;box-sizing:border-box;border:1px solid #b2b2b2"></div>
<div class="abs" style="left:851px;top:864.4px;width:70px;height:4px;background:#f0f0f0"></div>
<span class="t " style="left:853px;top:859.5799999999999px;transform:scaleX(0.771);transform-origin:0 0;">Number of Spans</span>
<div class="abs" style="left:878px;top:892px;width:39px;height:21px;box-sizing:border-box;border:1px solid;border-color:#a0a0a0 #fff #fff #a0a0a0;background:#fff;box-shadow:inset 1px 1px 0 #696969"></div>
<div class="abs" style="left:904px;top:894px;width:12px;height:18px;background:#f0f0f0;"></div>
<div class="abs" style="left:904px;top:894px;width:12px;height:9px;box-sizing:border-box;border:1px solid;border-color:#fff #696969 #696969 #fff"></div><div class="abs" style="left:904px;top:903px;width:12px;height:9px;box-sizing:border-box;border:1px solid;border-color:#fff #696969 #696969 #fff"></div>
<div class="abs" style="left:907.5px;top:896.5px;width:0;height:0;border-left:2.5px solid transparent;border-right:2.5px solid transparent;border-bottom:3px solid #000"></div><div class="abs" style="left:907.5px;top:906px;width:0;height:0;border-left:2.5px solid transparent;border-right:2.5px solid transparent;border-top:3px solid #000"></div>
<span class="t " style="left:896px;top:895px;font-size:12px;color:#8a8a8a;">3</span>
<span class="t " style="left:923px;top:898px;transform:scaleX(0.772);transform-origin:0 0;">(CTRL +/-)</span>
<div class="abs" style="left:999.9px;top:867.6px;width:84.0px;height:66.1px;box-sizing:border-box;background:#fff;border:1px solid;border-color:#a0a0a0 #fff #fff #a0a0a0;box-shadow:inset 1px 1px 0 #c8c8c8"></div>
<div class="abs" style="left:1089.5px;top:867.6px;width:84.0px;height:66.1px;box-sizing:border-box;background:#fff;border:1px solid;border-color:#a0a0a0 #fff #fff #a0a0a0;box-shadow:inset 1px 1px 0 #c8c8c8"></div>
<div class="abs" style="left:1179.1px;top:867.6px;width:83.7px;height:66.1px;box-sizing:border-box;background:#fff;border:1px solid;border-color:#a0a0a0 #fff #fff #a0a0a0;box-shadow:inset 1px 1px 0 #c8c8c8"></div>
<div class="abs" style="left:1268.4px;top:867.6px;width:84.1px;height:66.1px;box-sizing:border-box;background:#fff;border:1px solid;border-color:#a0a0a0 #fff #fff #a0a0a0;box-shadow:inset 1px 1px 0 #c8c8c8"></div>
<svg class="abs" style="left:996px;top:862px" width="360" height="78" viewBox="0 0 2560 555" font-family="Liberation Sans, sans-serif" fill="#333">
<rect x="165" y="190" width="290" height="110" fill="none" stroke="#e08a2e" stroke-width="9"/>
<path d="M150 150H470 M160 125V175 M460 125V175 M470 190H560 M470 300H560 M550 175V315 M128 190V450 M105 190H150" stroke="#333" stroke-width="6" fill="none"/><path d="M146 162L174 138" stroke="#333" stroke-width="6"/><path d="M446 162L474 138" stroke="#333" stroke-width="6"/><path d="M536 202L564 178" stroke="#333" stroke-width="6"/><path d="M536 312L564 288" stroke="#333" stroke-width="6"/>
<path d="M120 450H560" stroke="#000" stroke-width="11"/>
<text x="243" y="130" font-size="100">b</text><text x="566" y="330" font-size="100">h</text><text x="40" y="325" font-size="95">R</text><text x="88" y="360" font-size="70">h</text><text x="64" y="474" font-size="60">0</text><text x="578" y="474" font-size="60">0</text>
<path d="M705 195H1110V250H960V350H850V250H705Z" fill="none" stroke="#5ac81e" stroke-width="9"/><path d="M705 195H1110V250H960V350H850V250H705Z" fill="none" stroke="#2a6a10" stroke-width="2.500"/>
<path d="M695 150H1120 M1125 195H1205 M1135 350H1205 M1195 180V360 M1140 195V250 M965 350H1050 M848 365V415 M962 365V415 M835 405H975 M1120 250L1160 235L1130 300" stroke="#333" stroke-width="6" fill="none"/><path d="M691 162L719 138" stroke="#333" stroke-width="6"/><path d="M1096 162L1124 138" stroke="#333" stroke-width="6"/><path d="M1181 207L1209 183" stroke="#333" stroke-width="6"/><path d="M1181 362L1209 338" stroke="#333" stroke-width="6"/><path d="M834 417L862 393" stroke="#333" stroke-width="6"/><path d="M948 417L976 393" stroke="#333" stroke-width="6"/>
<text x="878" y="130" font-size="100">b</text><text x="928" y="140" font-size="50">f</text><text x="1205" y="310" font-size="100">h</text><text x="1062" y="335" font-size="95">h</text><text x="1112" y="355" font-size="50">f</text><text x="873" y="490" font-size="100">b</text>
<path d="M1335 175H1690V230H1535V355H1570V395H1445V355H1480V230H1335Z" fill="none" stroke="#b48cff" stroke-width="9"/><path d="M1335 175H1690V230H1535V355H1570V395H1445V355H1480V230H1335Z" fill="none" stroke="#e0d0ff" stroke-width="2.500"/>
<path d="M1325 140H1700 M1700 175H1835 M1720 165V240 M1700 232H1730 M1825 165V405 M1590 398H1835 M1600 345V395 M1415 325H1465 M1550 325H1595 M1385 440H1440 M1580 440H1625 M1445 415V465 M1570 405V470 M1610 385L1650 360" stroke="#333" stroke-width="6" fill="none"/><path d="M1321 152L1349 128" stroke="#333" stroke-width="6"/><path d="M1676 152L1704 128" stroke="#333" stroke-width="6"/><path d="M1811 187L1839 163" stroke="#333" stroke-width="6"/><path d="M1811 410L1839 386" stroke="#333" stroke-width="6"/><path d="M1706 187L1734 163" stroke="#333" stroke-width="6"/><path d="M1706 244L1734 220" stroke="#333" stroke-width="6"/><path d="M1586 367L1614 343" stroke="#333" stroke-width="6"/><path d="M1586 410L1614 386" stroke="#333" stroke-width="6"/>
<path d="M1470 325l-18-10v20Z M1548 325l18-10v20Z M1440 440l-18-10v20Z M1578 440l18-10v20Z" fill="#333"/>
<text x="1460" y="125" font-size="95">b</text><text x="1510" y="135" font-size="48">f</text><text x="1742" y="265" font-size="95">h</text><text x="1792" y="285" font-size="48">f</text><text x="1838" y="320" font-size="100">h</text><text x="1360" y="365" font-size="95">b</text><text x="1650" y="375" font-size="90">h</text><text x="1698" y="390" font-size="46">m</text><text x="1635" y="490" font-size="90">b</text><text x="1683" y="500" font-size="46">m</text>
<path d="M1965 185H2285V250H2190V315H2165V395H2090V315H2065V250H1965Z" fill="none" stroke="#28b4f0" stroke-width="9"/><path d="M1965 185H2285V250H2190V315H2165V395H2090V315H2065V250H1965Z" fill="none" stroke="#c8f0ff" stroke-width="2.500"/>
<path d="M1955 135H2295 M1965 115V160 M2285 115V160 M2295 185H2490 M2305 175V260 M2385 175V325 M2480 175V405 M2200 318H2395 M2175 398H2490 M1990 290H2040 M2210 290H2270 M2020 460H2075 M2180 460H2255 M2085 415V480 M2165 415V480" stroke="#333" stroke-width="6" fill="none"/><path d="M1951 147L1979 123" stroke="#333" stroke-width="6"/><path d="M2271 147L2299 123" stroke="#333" stroke-width="6"/><path d="M2291 197L2319 173" stroke="#333" stroke-width="6"/><path d="M2291 262L2319 238" stroke="#333" stroke-width="6"/><path d="M2371 197L2399 173" stroke="#333" stroke-width="6"/><path d="M2371 330L2399 306" stroke="#333" stroke-width="6"/><path d="M2466 197L2494 173" stroke="#333" stroke-width="6"/><path d="M2466 410L2494 386" stroke="#333" stroke-width="6"/>
<path d="M2046 290l-18-10v20Z M2205 290l18-10v20Z M2080 460l-18-10v20Z M2175 460l18-10v20Z" fill="#333"/>
<text x="2095" y="125" font-size="95">b</text><text x="2145" y="135" font-size="48">f</text><text x="2320" y="265" font-size="85">h</text><text x="2362" y="280" font-size="42">f</text><text x="2395" y="290" font-size="85">h</text><text x="2437" y="305" font-size="42">m</text><text x="2488" y="335" font-size="95">h</text><text x="1958" y="340" font-size="90">b</text><text x="2004" y="350" font-size="44">m</text><text x="1958" y="470" font-size="95">b</text>
</svg>
<div class="abs" style="left:1436px;top:867px;width:104px;height:71px;box-sizing:border-box;border:1px solid #fff"></div>
<div class="abs" style="left:1435px;top:866px;width:104px;height:71px;box-sizing:border-box;border:1px solid #b2b2b2"></div>
<div class="abs" style="left:1440px;top:865px;width:24px;height:4px;background:#f0f0f0"></div>
<span class="t " style="left:1442px;top:860.18px;transform:scaleX(0.798);transform-origin:0 0;">Units</span>
<span class="t " style="left:1447px;top:882px;transform:scaleX(0.87);transform-origin:0 0;">L = ft</span>
<span class="t " style="left:1447px;top:895px;transform:scaleX(0.87);transform-origin:0 0;">All others = in</span>
<div class="abs" style="left:847px;top:944px;width:623px;height:45px;box-sizing:border-box;border:1px solid #fff"></div>
<div class="abs" style="left:846px;top:943px;width:623px;height:45px;box-sizing:border-box;border:1px solid #b2b2b2"></div>
<div class="abs" style="left:851px;top:942px;width:33px;height:4px;background:#f0f0f0"></div>
<span class="t " style="left:853px;top:937.18px;transform:scaleX(0.790);transform-origin:0 0;">Legend</span>
<span class="t " style="left:852px;top:948.7px;transform:scaleX(0.764);transform-origin:0 0;">L-Cant = Left Cantilever</span>
<span class="t " style="left:986.5px;top:948.7px;transform:scaleX(0.765);transform-origin:0 0;">NP = Non-Prismatic</span>
<span class="t " style="left:1095.5px;top:948.7px;transform:scaleX(0.793);transform-origin:0 0;">Sec. = Section</span>
<span class="t " style="left:1197.5px;top:948.7px;transform:scaleX(0.811);transform-origin:0 0;">0-0 = Reference plane</span>
<span class="t " style="left:852px;top:961.5px;transform:scaleX(0.768);transform-origin:0 0;">R-Cant = Right Cantilever</span>
<span class="t " style="left:986.5px;top:961.5px;transform:scaleX(0.729);transform-origin:0 0;">PR  = Prismatic</span>
<span class="t " style="left:1095.5px;top:961.5px;transform:scaleX(0.767);transform-origin:0 0;">Seg. = Segments</span>
<span class="t " style="left:1204px;top:961.5px;transform:scaleX(0.790);transform-origin:0 0;">L =   Span Length</span>
<span class="t " style="left:1345px;top:948.7px;transform:scaleX(0.777);transform-origin:0 0;">Rh= Distance from</span>
<span class="t " style="left:1345px;top:959.5px;transform:scaleX(0.772);transform-origin:0 0;">reference plane</span>
<div class="abs" style="left:1326px;top:950px;width:14px;height:14px;box-sizing:border-box;border:1px solid;border-color:#fff #696969 #696969 #fff;background:#f0f0f0"></div>
<span class="t " style="left:1330px;top:950.5px;font-weight:bold;transform:scaleX(0.9);transform-origin:0 0;">?</span>
<div class="abs" style="left:846px;top:995px;width:634px;height:105px;background:#c0c0c0;box-shadow:inset 1px 1px 0 #808080"></div>
<div class="abs" style="left:846px;top:995.5px;width:634px;height:12.5px;background:#f0f0f0;"></div>
<div class="abs" style="left:1059px;top:1008px;width:421px;height:86.29999999999995px;background:#fff;"></div>
<div class="abs" style="left:846px;top:1022.5px;width:106.5px;height:71.79999999999995px;background:#fff;"></div>
<div class="abs" style="left:846px;top:1008px;width:106.5px;height:14.5px;background:#004040;"></div>
<div class="abs" style="left:1059px;top:1008px;width:421px;height:14.5px;background:#004040;"></div>
<div class="abs" style="left:952.5px;top:1008px;width:106.5px;height:86.29999999999995px;background:#bdbdbd;"></div>
<div class="abs" style="left:846px;top:995.0px;width:213px;height:1.0px;background:#3a3a3a;"></div>
<div class="abs" style="left:846px;top:1007.5px;width:213px;height:1.0px;background:#3a3a3a;"></div>
<div class="abs" style="left:1059px;top:1007.5px;width:53.5px;height:1.0px;background:#104010;"></div>
<div class="abs" style="left:1112.5px;top:1007.5px;width:300.5px;height:1.0px;background:#ffa64d;"></div>
<div class="abs" style="left:1413px;top:1007.5px;width:67px;height:1.0px;background:#44ee44;"></div>
<div class="abs" style="left:846px;top:1022.0px;width:213px;height:1.0px;background:#3a3a3a;"></div>
<div class="abs" style="left:1059px;top:1022.0px;width:53.5px;height:1.0px;background:#44ee44;"></div>
<div class="abs" style="left:1112.5px;top:1022.0px;width:300.5px;height:1.0px;background:#ffa64d;"></div>
<div class="abs" style="left:1413px;top:1022.0px;width:67px;height:1.0px;background:#44ee44;"></div>
<div class="abs" style="left:846px;top:1036.5px;width:213px;height:1.0px;background:#3a3a3a;"></div>
<div class="abs" style="left:1059px;top:1036.5px;width:53.5px;height:1.0px;background:#44ee44;"></div>
<div class="abs" style="left:1112.5px;top:1036.5px;width:300.5px;height:1.0px;background:#ffa64d;"></div>
<div class="abs" style="left:1413px;top:1036.5px;width:67px;height:1.0px;background:#44ee44;"></div>
<div class="abs" style="left:846px;top:1050.7px;width:213px;height:1.0px;background:#3a3a3a;"></div>
<div class="abs" style="left:1059px;top:1050.7px;width:53.5px;height:1.0px;background:#44ee44;"></div>
<div class="abs" style="left:1112.5px;top:1050.7px;width:300.5px;height:1.0px;background:#ffa64d;"></div>
<div class="abs" style="left:1413px;top:1050.7px;width:67px;height:1.0px;background:#44ee44;"></div>
<div class="abs" style="left:846px;top:1064.8px;width:213px;height:1.0px;background:#3a3a3a;"></div>
<div class="abs" style="left:1059px;top:1064.8px;width:53.5px;height:1.0px;background:#44ee44;"></div>
<div class="abs" style="left:1112.5px;top:1064.8px;width:300.5px;height:1.0px;background:#ffa64d;"></div>
<div class="abs" style="left:1413px;top:1064.8px;width:67px;height:1.0px;background:#44ee44;"></div>
<div class="abs" style="left:846px;top:1079.3px;width:213px;height:1.0px;background:#3a3a3a;"></div>
<div class="abs" style="left:1059px;top:1079.3px;width:53.5px;height:1.0px;background:#44ee44;"></div>
<div class="abs" style="left:1112.5px;top:1079.3px;width:300.5px;height:1.0px;background:#ffa64d;"></div>
<div class="abs" style="left:1413px;top:1079.3px;width:67px;height:1.0px;background:#44ee44;"></div>
<div class="abs" style="left:846px;top:1093.8px;width:213px;height:1.0px;background:#3a3a3a;"></div>
<div class="abs" style="left:1059px;top:1093.8px;width:53.5px;height:1.0px;background:#44ee44;"></div>
<div class="abs" style="left:1112.5px;top:1093.8px;width:300.5px;height:1.0px;background:#ffa64d;"></div>
<div class="abs" style="left:1413px;top:1093.8px;width:67px;height:1.0px;background:#44ee44;"></div>
<div class="abs" style="left:846px;top:995px;width:634px;height:1px;background:#808080;"></div>
<div class="abs" style="left:845.5px;top:995.5px;width:1.0px;height:98.79999999999995px;background:#3a3a3a;"></div>
<div class="abs" style="left:902.0px;top:995.5px;width:1.0px;height:98.79999999999995px;background:#3a3a3a;"></div>
<div class="abs" style="left:952.0px;top:995.5px;width:1.0px;height:98.79999999999995px;background:#3a3a3a;"></div>
<div class="abs" style="left:1008.0px;top:995.5px;width:1.0px;height:98.79999999999995px;background:#3a3a3a;"></div>
<div class="abs" style="left:1058.5px;top:995.5px;width:1.0px;height:98.79999999999995px;background:#3a3a3a;"></div>
<div class="abs" style="left:1112.0px;top:995.5px;width:1.0px;height:98.79999999999995px;background:#ffa64d;"></div>
<div class="abs" style="left:1161.5px;top:995.5px;width:1.0px;height:98.79999999999995px;background:#ffa64d;"></div>
<div class="abs" style="left:1211.0px;top:995.5px;width:1.0px;height:98.79999999999995px;background:#ffa64d;"></div>
<div class="abs" style="left:1262.5px;top:995.5px;width:1.0px;height:98.79999999999995px;background:#ffa64d;"></div>
<div class="abs" style="left:1310.5px;top:995.5px;width:1.0px;height:98.79999999999995px;background:#ffa64d;"></div>
<div class="abs" style="left:1359.0px;top:995.5px;width:1.0px;height:98.79999999999995px;background:#ffa64d;"></div>
<div class="abs" style="left:1412.5px;top:995.5px;width:1.0px;height:98.79999999999995px;background:#44ee44;"></div>
<div class="abs" style="left:846.5px;top:996px;width:55.5px;height:11.500px;box-sizing:border-box;border-left:1px solid #fff;border-top:1px solid #fff"></div>
<span class="t " style="left:861.32216796875px;top:995.5px;font-weight:bold;transform:scaleX(0.9);transform-origin:0 0;">Label</span>
<div class="abs" style="left:903.0px;top:996px;width:49.0px;height:11.500px;box-sizing:border-box;border-left:1px solid #fff;border-top:1px solid #fff"></div>
<span class="t " style="left:920.6234375px;top:995.5px;font-weight:bold;transform:scaleX(0.9);transform-origin:0 0;">PR</span>
<div class="abs" style="left:953.0px;top:996px;width:55.0px;height:11.500px;box-sizing:border-box;border-left:1px solid #fff;border-top:1px solid #fff"></div>
<span class="t " style="left:970.3169921875px;top:995.5px;font-weight:bold;transform:scaleX(0.9);transform-origin:0 0;">Sec.</span>
<div class="abs" style="left:1009.0px;top:996px;width:49.5px;height:11.500px;box-sizing:border-box;border-left:1px solid #fff;border-top:1px solid #fff"></div>
<span class="t " style="left:1023.2962890625px;top:995.5px;font-weight:bold;transform:scaleX(0.9);transform-origin:0 0;">Seg.</span>
<span class="t " style="left:1082.7265625px;top:995.5px;font-weight:bold;transform:scaleX(0.9);transform-origin:0 0;">L</span>
<span class="t " style="left:1134.2265625px;top:995.5px;font-weight:bold;transform:scaleX(0.9);transform-origin:0 0;">b</span>
<span class="t " style="left:1183.7265625px;top:995.5px;font-weight:bold;transform:scaleX(0.9);transform-origin:0 0;">h</span>
<span class="t " style="left:1232.577734375px;top:995.5px;font-weight:bold;transform:scaleX(0.9);transform-origin:0 0;">bf</span>
<span class="t " style="left:1282.327734375px;top:995.5px;font-weight:bold;transform:scaleX(0.9);transform-origin:0 0;">hf</span>
<span class="t " style="left:1327.825px;top:995.5px;font-weight:bold;transform:scaleX(0.9);transform-origin:0 0;">bm</span>
<span class="t " style="left:1378.825px;top:995.5px;font-weight:bold;transform:scaleX(0.9);transform-origin:0 0;">hm</span>
<span class="t " style="left:1434.90205078125px;top:995.5px;font-weight:bold;transform:scaleX(0.9);transform-origin:0 0;">Rh</span>
<span class="t " style="left:849px;top:1008.5px;color:#0000ff;font-weight:bold;transform:scaleX(0.863);transform-origin:0 0;">Typical</span>
<span class="t " style="left:905.5px;top:1008.5px;color:#0000ff;font-weight:bold;transform:scaleX(0.851);transform-origin:0 0;">PR</span>
<div class="abs" style="left:940px;top:1008.5px;width:11px;height:13.0px;box-sizing:border-box;background:#f0f0f0;border:1px solid;border-color:#fff #404040 #404040 #fff"></div><div class="abs" style="left:942.5px;top:1013.5px;width:0;height:0;border-left:3px solid transparent;border-right:3px solid transparent;border-top:3px solid #000"></div>
<svg class="abs" style="left:975.0px;top:1011.25px" width="12" height="9" viewBox="0 0 12 9"><path d="M.6 2.800H8.500V8.400H.6Z M.6 2.800L3 .6H11.400L8.500 2.800 M11.400 .6V6L8.500 8.400" fill="none" stroke="#222" stroke-width="1.100" stroke-linejoin="round"/><path d="M9.200 3L10.800 1.700V5.700L9.200 7.200Z" fill="#555"/></svg>
<span class="t " style="left:1090.2326171875px;top:1008.5px;color:#0000ff;font-weight:bold;transform:scaleX(0.9);transform-origin:0 0;">0.00</span>
<span class="t " style="left:1140.2326171875px;top:1008.5px;color:#0000ff;font-weight:bold;transform:scaleX(0.9);transform-origin:0 0;">0.00</span>
<span class="t " style="left:1189.7326171875px;top:1008.5px;color:#0000ff;font-weight:bold;transform:scaleX(0.9);transform-origin:0 0;">0.00</span>
<span class="t " style="left:1442px;top:1008.5px;color:#0000ff;font-weight:bold;transform:scaleX(0.9);transform-origin:0 0;">0.00</span>
<div class="abs" style="left:848px;top:1024.0px;width:9px;height:10px;box-sizing:border-box;background:#fff;border:1px solid;border-color:#808080 #e8e8e8 #e8e8e8 #808080"></div>
<span class="t " style="left:862px;top:1023.0px;font-weight:bold;transform:scaleX(0.847);transform-origin:0 0;">L-Cant</span>
<div class="abs" style="left:940px;top:1023.0px;width:11px;height:13.0px;box-sizing:border-box;background:#f0f0f0;border:1px solid;border-color:#fff #404040 #404040 #fff"></div><div class="abs" style="left:942.5px;top:1028.0px;width:0;height:0;border-left:3px solid transparent;border-right:3px solid transparent;border-top:3px solid #000"></div>
<span class="t " style="left:849px;top:1037.5px;color:#000;font-weight:bold;transform:scaleX(0.848);transform-origin:0 0;">SPAN 1</span>
<span class="t " style="left:905.5px;top:1037.5px;color:#000;font-weight:bold;transform:scaleX(0.851);transform-origin:0 0;">PR</span>
<div class="abs" style="left:940px;top:1037.5px;width:11px;height:12.700000000000045px;box-sizing:border-box;background:#f0f0f0;border:1px solid;border-color:#fff #404040 #404040 #fff"></div><div class="abs" style="left:942.5px;top:1042.35px;width:0;height:0;border-left:3px solid transparent;border-right:3px solid transparent;border-top:3px solid #000"></div>
<svg class="abs" style="left:975.0px;top:1040.1px" width="12" height="9" viewBox="0 0 12 9"><path d="M.6 2.800H8.500V8.400H.6Z M.6 2.800L3 .6H11.400L8.500 2.800 M11.400 .6V6L8.500 8.400" fill="none" stroke="#222" stroke-width="1.100" stroke-linejoin="round"/><path d="M9.200 3L10.800 1.700V5.700L9.200 7.200Z" fill="#555"/></svg>
<span class="t " style="left:1084.7271484375px;top:1037.5px;color:#000;font-weight:bold;transform:scaleX(0.9);transform-origin:0 0;">19.17</span>
<span class="t " style="left:1134.7271484375px;top:1037.5px;color:#000;font-weight:bold;transform:scaleX(0.9);transform-origin:0 0;">12.00</span>
<span class="t " style="left:1184.2271484375px;top:1037.5px;color:#000;font-weight:bold;transform:scaleX(0.9);transform-origin:0 0;">10.00</span>
<span class="t " style="left:1437px;top:1037.5px;color:#000;font-weight:bold;transform:scaleX(0.9);transform-origin:0 0;">10.00</span>
<span class="t " style="left:849px;top:1051.7px;color:#000;font-weight:bold;transform:scaleX(0.848);transform-origin:0 0;">SPAN 2</span>
<span class="t " style="left:905.5px;top:1051.7px;color:#000;font-weight:bold;transform:scaleX(0.851);transform-origin:0 0;">PR</span>
<div class="abs" style="left:940px;top:1051.7px;width:11px;height:12.599999999999909px;box-sizing:border-box;background:#f0f0f0;border:1px solid;border-color:#fff #404040 #404040 #fff"></div><div class="abs" style="left:942.5px;top:1056.5px;width:0;height:0;border-left:3px solid transparent;border-right:3px solid transparent;border-top:3px solid #000"></div>
<svg class="abs" style="left:975.0px;top:1054.25px" width="12" height="9" viewBox="0 0 12 9"><path d="M.6 2.800H8.500V8.400H.6Z M.6 2.800L3 .6H11.400L8.500 2.800 M11.400 .6V6L8.500 8.400" fill="none" stroke="#222" stroke-width="1.100" stroke-linejoin="round"/><path d="M9.200 3L10.800 1.700V5.700L9.200 7.200Z" fill="#555"/></svg>
<span class="t " style="left:1084.7271484375px;top:1051.7px;color:#000;font-weight:bold;transform:scaleX(0.9);transform-origin:0 0;">27.17</span>
<span class="t " style="left:1134.7271484375px;top:1051.7px;color:#000;font-weight:bold;transform:scaleX(0.9);transform-origin:0 0;">12.00</span>
<span class="t " style="left:1184.2271484375px;top:1051.7px;color:#000;font-weight:bold;transform:scaleX(0.9);transform-origin:0 0;">10.00</span>
<span class="t " style="left:1437px;top:1051.7px;color:#000;font-weight:bold;transform:scaleX(0.9);transform-origin:0 0;">10.00</span>
<span class="t " style="left:849px;top:1065.8px;color:#000;font-weight:bold;transform:scaleX(0.848);transform-origin:0 0;">SPAN 3</span>
<span class="t " style="left:905.5px;top:1065.8px;color:#000;font-weight:bold;transform:scaleX(0.851);transform-origin:0 0;">PR</span>
<div class="abs" style="left:940px;top:1065.8px;width:11px;height:13.0px;box-sizing:border-box;background:#f0f0f0;border:1px solid;border-color:#fff #404040 #404040 #fff"></div><div class="abs" style="left:942.5px;top:1070.8px;width:0;height:0;border-left:3px solid transparent;border-right:3px solid transparent;border-top:3px solid #000"></div>
<svg class="abs" style="left:975.0px;top:1068.55px" width="12" height="9" viewBox="0 0 12 9"><path d="M.6 2.800H8.500V8.400H.6Z M.6 2.800L3 .6H11.400L8.500 2.800 M11.400 .6V6L8.500 8.400" fill="none" stroke="#222" stroke-width="1.100" stroke-linejoin="round"/><path d="M9.200 3L10.800 1.700V5.700L9.200 7.200Z" fill="#555"/></svg>
<span class="t " style="left:1084.7271484375px;top:1065.8px;color:#000;font-weight:bold;transform:scaleX(0.9);transform-origin:0 0;">22.75</span>
<span class="t " style="left:1134.7271484375px;top:1065.8px;color:#000;font-weight:bold;transform:scaleX(0.9);transform-origin:0 0;">12.00</span>
<span class="t " style="left:1184.2271484375px;top:1065.8px;color:#000;font-weight:bold;transform:scaleX(0.9);transform-origin:0 0;">10.00</span>
<span class="t " style="left:1437px;top:1065.8px;color:#000;font-weight:bold;transform:scaleX(0.9);transform-origin:0 0;">10.00</span>
<div class="abs" style="left:848px;top:1081.3px;width:9px;height:10px;box-sizing:border-box;background:#fff;border:1px solid;border-color:#808080 #e8e8e8 #e8e8e8 #808080"></div>
<svg class="abs" style="left:849px;top:1082.8px" width="8" height="8" viewBox="0 0 8 8"><path d="M.8 3.500L3 5.800L7 1.200" fill="none" stroke="#000" stroke-width="1.500"/></svg>
<span class="t " style="left:862px;top:1080.3px;font-weight:bold;transform:scaleX(0.860);transform-origin:0 0;">R-Cant</span>
<span class="t " style="left:905.5px;top:1080.3px;color:#000;font-weight:bold;transform:scaleX(0.851);transform-origin:0 0;">PR</span>
<div class="abs" style="left:940px;top:1080.3px;width:11px;height:13.0px;box-sizing:border-box;background:#f0f0f0;border:1px solid;border-color:#fff #404040 #404040 #fff"></div><div class="abs" style="left:942.5px;top:1085.3px;width:0;height:0;border-left:3px solid transparent;border-right:3px solid transparent;border-top:3px solid #000"></div>
<svg class="abs" style="left:975.0px;top:1083.05px" width="12" height="9" viewBox="0 0 12 9"><path d="M.6 2.800H8.500V8.400H.6Z M.6 2.800L3 .6H11.400L8.500 2.800 M11.400 .6V6L8.500 8.400" fill="none" stroke="#222" stroke-width="1.100" stroke-linejoin="round"/><path d="M9.200 3L10.800 1.700V5.700L9.200 7.200Z" fill="#555"/></svg>
<span class="t " style="left:1090.2326171875px;top:1080.3px;color:#000;font-weight:bold;transform:scaleX(0.9);transform-origin:0 0;">3.50</span>
<span class="t " style="left:1134.7271484375px;top:1080.3px;color:#000;font-weight:bold;transform:scaleX(0.9);transform-origin:0 0;">12.00</span>
<span class="t " style="left:1184.2271484375px;top:1080.3px;color:#000;font-weight:bold;transform:scaleX(0.9);transform-origin:0 0;">10.00</span>
<span class="t " style="left:1437px;top:1080.3px;color:#000;font-weight:bold;transform:scaleX(0.9);transform-origin:0 0;">10.00</span>
<div class="abs" style="left:847px;top:1008.500px;width:55px;height:13.500px;box-sizing:border-box;border:1px solid #c8b0a8;outline:1px solid #202020;outline-offset:-2px"></div>
<div class="abs" style="left:1109px;top:1106px;width:63.5px;height:26.5px;box-sizing:border-box;border:1px solid #000;background:#f0f0f0"></div>
<div class="abs" style="left:1110px;top:1107px;width:61.5px;height:24.5px;box-sizing:border-box;border:1px solid;border-color:#fff #696969 #696969 #fff;box-shadow:inset -1px -1px 0 #a0a0a0"></div>
<div class="abs" style="left:1113px;top:1110px;width:55.5px;height:18.5px;box-sizing:border-box;border:1px dotted #000"></div>
<span class="t " style="left:1123.193671875px;top:1112.75px;transform:scaleX(0.87);transform-origin:0 0;">&lt;&lt; <u>B</u>ack</span>
<div class="abs" style="left:1179.5px;top:1106px;width:63.0px;height:26.5px;box-sizing:border-box;border:1px solid;border-color:#fff #696969 #696969 #fff;box-shadow:inset -1px -1px 0 #a0a0a0;background:#f0f0f0"></div>
<span class="t " style="left:1204.08587890625px;top:1112.75px;transform:scaleX(0.87);transform-origin:0 0;"><u>O</u>K</span></div></div>
<div class="abs" style="left:1244px;top:1060.5px;width:670px;height:300.5px;box-sizing:border-box;border:1px solid #8d979f;border-radius:6px 6px 1px 1px;background:linear-gradient(#bfcee0,#dbe8f5 26px,#dbe8f5);box-shadow:inset 0 1px 0 rgba(255,255,255,.35)"></div>
<div class="abs" style="left:1250px;top:1085.5px;width:658px;height:269.5px;background:#f0f0f0"></div>
<span class="t" style="left:1253px;top:1070.5px;font-size:6px;font-style:italic;color:#c8c8c8;letter-spacing:-.3px">pult</span>
<span class="t " style="left:1267.5px;top:1069.0px;font-size:12px;color:#a9b1bb;transform:scaleX(0.783);transform-origin:0 0;">Support Geometry and Stiffness</span>
<div class="abs" style="left:1250px;top:1085.0px;width:658px;height:270.0px;overflow:hidden"><div class="abs" style="left:-1250px;top:-1085.0px;width:2560px;height:1440px"><div class="abs" style="left:1257px;top:1092.5px;width:416px;height:62.5px;box-sizing:border-box;border:1px solid #fff"></div>
<div class="abs" style="left:1256px;top:1091.5px;width:416px;height:62.5px;box-sizing:border-box;border:1px solid #b2b2b2"></div>
<div class="abs" style="left:1262px;top:1090.5px;width:86px;height:4px;background:#f0f0f0"></div>
<span class="t " style="left:1264px;top:1084.44px;font-size:13px;transform:scaleX(0.816);transform-origin:0 0;">Support selection</span>
<div class="abs" style="left:1301px;top:1129.5px;width:10px;height:10px;box-sizing:border-box;border-radius:50%;border:1px solid;border-color:#808080 #fff #fff #808080;background:#fff;box-shadow:inset .7px .7px 0 #555,0 0 0 .5px #e6e6e6"></div>
<span class="t " style="left:1315.5px;top:1128px;transform:scaleX(0.761);transform-origin:0 0;"><u>L</u>ower Column</span>
<div class="abs" style="left:1416.5px;top:1129.5px;width:10px;height:10px;box-sizing:border-box;border-radius:50%;border:1px solid;border-color:#808080 #fff #fff #808080;background:#fff;box-shadow:inset .7px .7px 0 #555,0 0 0 .5px #e6e6e6"></div><div class="abs" style="left:1419.8px;top:1132.8px;width:3.400px;height:3.400px;border-radius:50%;background:#000"></div>
<span class="t " style="left:1431px;top:1128px;transform:scaleX(0.796);transform-origin:0 0;">Bot<u>h</u> Columns</span>
<div class="abs" style="left:1532px;top:1129.5px;width:10px;height:10px;box-sizing:border-box;border-radius:50%;border:1px solid;border-color:#808080 #fff #fff #808080;background:#fff;box-shadow:inset .7px .7px 0 #555,0 0 0 .5px #e6e6e6"></div>
<span class="t " style="left:1547px;top:1128px;transform:scaleX(0.776);transform-origin:0 0;"><u>U</u>pper Column</span>
<div class="abs" style="left:1679px;top:1092px;width:227px;height:61px;box-sizing:border-box;border:1px solid;border-color:#a0a0a0 #fff #fff #a0a0a0;background:#fff;box-shadow:inset 1px 1px 0 #696969"></div>
<div class="abs" style="left:1755px;top:1144px;width:1px;height:8px;background:#444;"></div>
<div class="abs" style="left:1830px;top:1144px;width:1px;height:8px;background:#444;"></div>
<span class="t " style="left:1704px;top:1140px;font-size:9px;color:#444;">B</span>
<span class="t " style="left:1786px;top:1139px;font-size:9px;color:#444;">↓</span>
<svg class="abs" style="left:1846px;top:1144px" width="24" height="6" viewBox="0 0 24 6"><path d="M2 5L6 0M7 5L11 0M12 5L16 0M17 5L21 0" stroke="#b05040" stroke-width="1"/></svg>
<div class="abs" style="left:1257px;top:1161.2px;width:531px;height:58.799999999999955px;box-sizing:border-box;border:1px solid #fff"></div>
<div class="abs" style="left:1256px;top:1160.2px;width:531px;height:58.799999999999955px;box-sizing:border-box;border:1px solid #b2b2b2"></div>
<div class="abs" style="left:1261.5px;top:1159.2px;width:33.5px;height:4px;background:#f0f0f0"></div>
<span class="t " style="left:1263.5px;top:1154.38px;transform:scaleX(0.804);transform-origin:0 0;">Legend</span>
<span class="t " style="left:1263px;top:1167.3px;transform:scaleX(0.771);transform-origin:0 0;">H1 = Lower Column Length</span>
<span class="t " style="left:1263px;top:1183.3px;transform:scaleX(0.771);transform-origin:0 0;">H2 = Upper Column Length</span>
<span class="t " style="left:1265px;top:1199.3px;transform:scaleX(0.752);transform-origin:0 0;">%  = Percentage of column stiffness...</span>
<span class="t " style="left:1448.5px;top:1167.3px;transform:scaleX(0.755);transform-origin:0 0;">D  = Dimension in Span Direction</span>
<span class="t " style="left:1448.5px;top:1183.3px;transform:scaleX(0.773);transform-origin:0 0;">Dc = Diameter of circular column</span>
<span class="t " style="left:1448.5px;top:1199.3px;transform:scaleX(0.746);transform-origin:0 0;">B  = Dimension normal to span</span>
<span class="t " style="left:1615.5px;top:1173.8px;transform:scaleX(0.758);transform-origin:0 0;">Left edge = Interior or exterior...</span>
<span class="t " style="left:1615.5px;top:1193px;transform:scaleX(0.760);transform-origin:0 0;">Right edge = Interior or exterior...</span>
<div class="abs" style="left:1795px;top:1161.2px;width:114px;height:58.799999999999955px;box-sizing:border-box;border:1px solid #fff"></div>
<div class="abs" style="left:1794px;top:1160.2px;width:114px;height:58.799999999999955px;box-sizing:border-box;border:1px solid #b2b2b2"></div>
<div class="abs" style="left:1799.5px;top:1159.2px;width:23.5px;height:4px;background:#f0f0f0"></div>
<span class="t " style="left:1801.5px;top:1154.38px;transform:scaleX(0.778);transform-origin:0 0;">Units</span>
<span class="t " style="left:1820px;top:1173.8px;transform:scaleX(0.752);transform-origin:0 0;">H = ft</span>
<span class="t " style="left:1820px;top:1193px;transform:scaleX(0.769);transform-origin:0 0;">All others = in</span>
<div class="abs" style="left:1256px;top:1226.5px;width:652px;height:87.5px;background:#c0c0c0;box-shadow:inset 1px 1px 0 #808080"></div>
<div class="abs" style="left:1256.5px;top:1227px;width:634.5px;height:12.5px;background:#f0f0f0;"></div>
<div class="abs" style="left:1256px;top:1226.5px;width:635px;height:1.0px;background:#7a7a7a;"></div>
<div class="abs" style="left:1256.5px;top:1239.5px;width:634.5px;height:64.29999999999995px;background:#fff;"></div>
<div class="abs" style="left:1308.5px;top:1239.5px;width:458.0px;height:13.0px;background:#004040;"></div>
<div class="abs" style="left:1256.5px;top:1226.5px;width:52.0px;height:1.0px;background:#3a3a3a;"></div>
<div class="abs" style="left:1766.5px;top:1226.5px;width:124.5px;height:1.0px;background:#3a3a3a;"></div>
<div class="abs" style="left:1256.5px;top:1239.0px;width:52.0px;height:1.0px;background:#3a3a3a;"></div>
<div class="abs" style="left:1308.5px;top:1239.0px;width:226.5px;height:1.0px;background:#ffa64d;"></div>
<div class="abs" style="left:1535px;top:1239.0px;width:231.5px;height:1.0px;background:#44ee44;"></div>
<div class="abs" style="left:1766.5px;top:1239.0px;width:124.5px;height:1.0px;background:#3a3a3a;"></div>
<div class="abs" style="left:1256.5px;top:1252.0px;width:52.0px;height:1.0px;background:#3a3a3a;"></div>
<div class="abs" style="left:1308.5px;top:1252.0px;width:226.5px;height:1.0px;background:#ffa64d;"></div>
<div class="abs" style="left:1535px;top:1252.0px;width:231.5px;height:1.0px;background:#44ee44;"></div>
<div class="abs" style="left:1766.5px;top:1252.0px;width:124.5px;height:1.0px;background:#3a3a3a;"></div>
<div class="abs" style="left:1256.5px;top:1264.8px;width:52.0px;height:1.0px;background:#3a3a3a;"></div>
<div class="abs" style="left:1308.5px;top:1264.8px;width:226.5px;height:1.0px;background:#ffa64d;"></div>
<div class="abs" style="left:1535px;top:1264.8px;width:231.5px;height:1.0px;background:#44ee44;"></div>
<div class="abs" style="left:1766.5px;top:1264.8px;width:124.5px;height:1.0px;background:#3a3a3a;"></div>
<div class="abs" style="left:1256.5px;top:1277.7px;width:52.0px;height:1.0px;background:#3a3a3a;"></div>
<div class="abs" style="left:1308.5px;top:1277.7px;width:226.5px;height:1.0px;background:#ffa64d;"></div>
<div class="abs" style="left:1535px;top:1277.7px;width:231.5px;height:1.0px;background:#44ee44;"></div>
<div class="abs" style="left:1766.5px;top:1277.7px;width:124.5px;height:1.0px;background:#3a3a3a;"></div>
<div class="abs" style="left:1256.5px;top:1290.5px;width:52.0px;height:1.0px;background:#3a3a3a;"></div>
<div class="abs" style="left:1308.5px;top:1290.5px;width:226.5px;height:1.0px;background:#ffa64d;"></div>
<div class="abs" style="left:1535px;top:1290.5px;width:231.5px;height:1.0px;background:#44ee44;"></div>
<div class="abs" style="left:1766.5px;top:1290.5px;width:124.5px;height:1.0px;background:#3a3a3a;"></div>
<div class="abs" style="left:1256.5px;top:1303.3px;width:52.0px;height:1.0px;background:#3a3a3a;"></div>
<div class="abs" style="left:1308.5px;top:1303.3px;width:226.5px;height:1.0px;background:#ffa64d;"></div>
<div class="abs" style="left:1535px;top:1303.3px;width:231.5px;height:1.0px;background:#44ee44;"></div>
<div class="abs" style="left:1766.5px;top:1303.3px;width:124.5px;height:1.0px;background:#3a3a3a;"></div>
<div class="abs" style="left:1256.0px;top:1227px;width:1.0px;height:76.79999999999995px;background:#3a3a3a;"></div>
<div class="abs" style="left:1308.0px;top:1227px;width:1.0px;height:76.79999999999995px;background:#ffa64d;"></div>
<div class="abs" style="left:1356.0px;top:1227px;width:1.0px;height:76.79999999999995px;background:#ffa64d;"></div>
<div class="abs" style="left:1403.0px;top:1227px;width:1.0px;height:76.79999999999995px;background:#ffa64d;"></div>
<div class="abs" style="left:1451.5px;top:1227px;width:1.0px;height:76.79999999999995px;background:#ffa64d;"></div>
<div class="abs" style="left:1499.5px;top:1227px;width:1.0px;height:76.79999999999995px;background:#ffa64d;"></div>
<div class="abs" style="left:1534.5px;top:1227px;width:1.0px;height:76.79999999999995px;background:#44ee44;"></div>
<div class="abs" style="left:1584.5px;top:1227px;width:1.0px;height:76.79999999999995px;background:#44ee44;"></div>
<div class="abs" style="left:1633.0px;top:1227px;width:1.0px;height:76.79999999999995px;background:#44ee44;"></div>
<div class="abs" style="left:1681.5px;top:1227px;width:1.0px;height:76.79999999999995px;background:#44ee44;"></div>
<div class="abs" style="left:1730.0px;top:1227px;width:1.0px;height:76.79999999999995px;background:#44ee44;"></div>
<div class="abs" style="left:1766.0px;top:1227px;width:1.0px;height:76.79999999999995px;background:#44ee44;"></div>
<div class="abs" style="left:1823.5px;top:1227px;width:1.0px;height:76.79999999999995px;background:#3a3a3a;"></div>
<div class="abs" style="left:1890.5px;top:1227px;width:1.0px;height:76.79999999999995px;background:#3a3a3a;"></div>
<div class="abs" style="left:1766px;top:1227px;width:1px;height:76.79999999999995px;background:#3a3a3a;"></div>
<div class="abs" style="left:1257.0px;top:1227.500px;width:51.0px;height:11.500px;box-sizing:border-box;border-left:1px solid #fff;border-top:1px solid #fff"></div>
<span class="t " style="left:1263.52880859375px;top:1227.5px;font-weight:bold;transform:scaleX(0.9);transform-origin:0 0;">Support</span>
<span class="t " style="left:1326.17275390625px;top:1227.5px;font-weight:bold;transform:scaleX(0.9);transform-origin:0 0;">H1</span>
<span class="t " style="left:1376.42548828125px;top:1227.5px;font-weight:bold;transform:scaleX(0.9);transform-origin:0 0;">B</span>
<span class="t " style="left:1424.17548828125px;top:1227.5px;font-weight:bold;transform:scaleX(0.9);transform-origin:0 0;">D</span>
<span class="t " style="left:1469.67275390625px;top:1227.5px;font-weight:bold;transform:scaleX(0.9);transform-origin:0 0;">Dc</span>
<span class="t " style="left:1513.0984375px;top:1227.5px;font-weight:bold;transform:scaleX(0.9);transform-origin:0 0;">%</span>
<span class="t " style="left:1553.67275390625px;top:1227.5px;font-weight:bold;transform:scaleX(0.9);transform-origin:0 0;">H2</span>
<span class="t " style="left:1605.67548828125px;top:1227.5px;font-weight:bold;transform:scaleX(0.9);transform-origin:0 0;">B</span>
<span class="t " style="left:1654.17548828125px;top:1227.5px;font-weight:bold;transform:scaleX(0.9);transform-origin:0 0;">D</span>
<span class="t " style="left:1699.92275390625px;top:1227.5px;font-weight:bold;transform:scaleX(0.9);transform-origin:0 0;">Dc</span>
<span class="t " style="left:1744.0984375px;top:1227.5px;font-weight:bold;transform:scaleX(0.9);transform-origin:0 0;">%</span>
<div class="abs" style="left:1767.0px;top:1227.500px;width:56.5px;height:11.500px;box-sizing:border-box;border-left:1px solid #fff;border-top:1px solid #fff"></div>
<span class="t " style="left:1773.24833984375px;top:1227.5px;font-weight:bold;transform:scaleX(0.9);transform-origin:0 0;">Left edge</span>
<div class="abs" style="left:1824.5px;top:1227.500px;width:66px;height:11.500px;box-sizing:border-box;border-left:1px solid #fff;border-top:1px solid #fff"></div>
<span class="t " style="left:1831.92646484375px;top:1227.5px;font-weight:bold;transform:scaleX(0.9);transform-origin:0 0;">Right edge</span>
<div class="abs" style="left:1309px;top:1240px;width:47.500px;height:12.500px;box-sizing:border-box;border:1px solid #000;outline:1px solid #ffb0a0;outline-offset:-2px"></div>
<span class="t " style="left:1334.7326171875px;top:1239.0px;color:#0000ff;font-weight:bold;transform:scaleX(0.9);transform-origin:0 0;">0.00</span>
<span class="t " style="left:1381.7326171875px;top:1239.0px;color:#0000ff;font-weight:bold;transform:scaleX(0.9);transform-origin:0 0;">0.00</span>
<span class="t " style="left:1430.2326171875px;top:1239.0px;color:#0000ff;font-weight:bold;transform:scaleX(0.9);transform-origin:0 0;">0.00</span>
<span class="t " style="left:1502.2216796875px;top:1239.0px;color:#0000ff;font-weight:bold;transform:scaleX(0.9);transform-origin:0 0;">100.00</span>
<span class="t " style="left:1563.2326171875px;top:1239.0px;color:#0000ff;font-weight:bold;transform:scaleX(0.9);transform-origin:0 0;">0.00</span>
<span class="t " style="left:1611.7326171875px;top:1239.0px;color:#0000ff;font-weight:bold;transform:scaleX(0.9);transform-origin:0 0;">0.00</span>
<span class="t " style="left:1660.2326171875px;top:1239.0px;color:#0000ff;font-weight:bold;transform:scaleX(0.9);transform-origin:0 0;">0.00</span>
<span class="t " style="left:1733.7216796875px;top:1239.0px;color:#0000ff;font-weight:bold;transform:scaleX(0.9);transform-origin:0 0;">100.00</span>
<span class="t " style="left:1768.5px;top:1239.0px;color:#0000ff;font-weight:bold;transform:scaleX(0.858);transform-origin:0 0;">Interior</span>
<span class="t " style="left:1826px;top:1239.0px;color:#0000ff;font-weight:bold;transform:scaleX(0.858);transform-origin:0 0;">Interior</span>
<div class="abs" style="left:1811.5px;top:1240.0px;width:11px;height:11.5px;box-sizing:border-box;background:#f0f0f0;border:1px solid;border-color:#fff #404040 #404040 #fff"></div><div class="abs" style="left:1814.0px;top:1244.25px;width:0;height:0;border-left:3px solid transparent;border-right:3px solid transparent;border-top:3px solid #000"></div>
<div class="abs" style="left:1879px;top:1240.0px;width:11px;height:11.5px;box-sizing:border-box;background:#f0f0f0;border:1px solid;border-color:#fff #404040 #404040 #fff"></div><div class="abs" style="left:1881.5px;top:1244.25px;width:0;height:0;border-left:3px solid transparent;border-right:3px solid transparent;border-top:3px solid #000"></div>
<span class="t " style="left:1262px;top:1252.0px;font-weight:bold;transform:scaleX(0.9);transform-origin:0 0;">1</span>
<span class="t " style="left:1329.2271484375px;top:1252.0px;color:#000;font-weight:bold;transform:scaleX(0.9);transform-origin:0 0;">10.00</span>
<span class="t " style="left:1370.7216796875px;top:1252.0px;color:#000;font-weight:bold;transform:scaleX(0.9);transform-origin:0 0;">216.00</span>
<span class="t " style="left:1430.2326171875px;top:1252.0px;color:#000;font-weight:bold;transform:scaleX(0.9);transform-origin:0 0;">8.00</span>
<span class="t " style="left:1502.2216796875px;top:1252.0px;color:#0000ff;font-weight:bold;transform:scaleX(0.9);transform-origin:0 0;">100.00</span>
<span class="t " style="left:1563.2326171875px;top:1252.0px;color:#000;font-weight:bold;transform:scaleX(0.9);transform-origin:0 0;">0.00</span>
<span class="t " style="left:1708.7326171875px;top:1252.0px;color:#0000ff;font-weight:bold;transform:scaleX(0.9);transform-origin:0 0;">0.00</span>
<span class="t " style="left:1733.7216796875px;top:1252.0px;color:#0000ff;font-weight:bold;transform:scaleX(0.9);transform-origin:0 0;">100.00</span>
<span class="t " style="left:1768.5px;top:1252.0px;color:#000;font-weight:bold;transform:scaleX(0.818);transform-origin:0 0;">Exterior</span>
<span class="t " style="left:1826px;top:1252.0px;color:#000;font-weight:bold;transform:scaleX(0.818);transform-origin:0 0;">Exterior</span>
<div class="abs" style="left:1811.5px;top:1253.0px;width:11px;height:11.299999999999955px;box-sizing:border-box;background:#f0f0f0;border:1px solid;border-color:#fff #404040 #404040 #fff"></div><div class="abs" style="left:1814.0px;top:1257.15px;width:0;height:0;border-left:3px solid transparent;border-right:3px solid transparent;border-top:3px solid #000"></div>
<div class="abs" style="left:1879px;top:1253.0px;width:11px;height:11.299999999999955px;box-sizing:border-box;background:#f0f0f0;border:1px solid;border-color:#fff #404040 #404040 #fff"></div><div class="abs" style="left:1881.5px;top:1257.15px;width:0;height:0;border-left:3px solid transparent;border-right:3px solid transparent;border-top:3px solid #000"></div>
<span class="t " style="left:1262px;top:1264.8px;font-weight:bold;transform:scaleX(0.9);transform-origin:0 0;">2</span>
<span class="t " style="left:1329.2271484375px;top:1264.8px;color:#000;font-weight:bold;transform:scaleX(0.9);transform-origin:0 0;">10.00</span>
<span class="t " style="left:1376.2271484375px;top:1264.8px;color:#000;font-weight:bold;transform:scaleX(0.9);transform-origin:0 0;">12.00</span>
<span class="t " style="left:1424.7271484375px;top:1264.8px;color:#000;font-weight:bold;transform:scaleX(0.9);transform-origin:0 0;">18.00</span>
<span class="t " style="left:1502.2216796875px;top:1264.8px;color:#0000ff;font-weight:bold;transform:scaleX(0.9);transform-origin:0 0;">100.00</span>
<span class="t " style="left:1563.2326171875px;top:1264.8px;color:#000;font-weight:bold;transform:scaleX(0.9);transform-origin:0 0;">0.00</span>
<span class="t " style="left:1708.7326171875px;top:1264.8px;color:#0000ff;font-weight:bold;transform:scaleX(0.9);transform-origin:0 0;">0.00</span>
<span class="t " style="left:1733.7216796875px;top:1264.8px;color:#0000ff;font-weight:bold;transform:scaleX(0.9);transform-origin:0 0;">100.00</span>
<span class="t " style="left:1768.5px;top:1264.8px;color:#000;font-weight:bold;transform:scaleX(0.818);transform-origin:0 0;">Exterior</span>
<span class="t " style="left:1826px;top:1264.8px;color:#000;font-weight:bold;transform:scaleX(0.818);transform-origin:0 0;">Exterior</span>
<div class="abs" style="left:1811.5px;top:1265.8px;width:11px;height:11.400000000000091px;box-sizing:border-box;background:#f0f0f0;border:1px solid;border-color:#fff #404040 #404040 #fff"></div><div class="abs" style="left:1814.0px;top:1270.0px;width:0;height:0;border-left:3px solid transparent;border-right:3px solid transparent;border-top:3px solid #000"></div>
<div class="abs" style="left:1879px;top:1265.8px;width:11px;height:11.400000000000091px;box-sizing:border-box;background:#f0f0f0;border:1px solid;border-color:#fff #404040 #404040 #fff"></div><div class="abs" style="left:1881.5px;top:1270.0px;width:0;height:0;border-left:3px solid transparent;border-right:3px solid transparent;border-top:3px solid #000"></div>
<span class="t " style="left:1262px;top:1277.7px;font-weight:bold;transform:scaleX(0.9);transform-origin:0 0;">3</span>
<span class="t " style="left:1329.2271484375px;top:1277.7px;color:#000;font-weight:bold;transform:scaleX(0.9);transform-origin:0 0;">10.00</span>
<span class="t " style="left:1376.2271484375px;top:1277.7px;color:#000;font-weight:bold;transform:scaleX(0.9);transform-origin:0 0;">12.00</span>
<span class="t " style="left:1424.7271484375px;top:1277.7px;color:#000;font-weight:bold;transform:scaleX(0.9);transform-origin:0 0;">18.00</span>
<span class="t " style="left:1502.2216796875px;top:1277.7px;color:#0000ff;font-weight:bold;transform:scaleX(0.9);transform-origin:0 0;">100.00</span>
<span class="t " style="left:1563.2326171875px;top:1277.7px;color:#000;font-weight:bold;transform:scaleX(0.9);transform-origin:0 0;">0.00</span>
<span class="t " style="left:1708.7326171875px;top:1277.7px;color:#0000ff;font-weight:bold;transform:scaleX(0.9);transform-origin:0 0;">0.00</span>
<span class="t " style="left:1733.7216796875px;top:1277.7px;color:#0000ff;font-weight:bold;transform:scaleX(0.9);transform-origin:0 0;">100.00</span>
<span class="t " style="left:1768.5px;top:1277.7px;color:#000;font-weight:bold;transform:scaleX(0.818);transform-origin:0 0;">Exterior</span>
<span class="t " style="left:1826px;top:1277.7px;color:#000;font-weight:bold;transform:scaleX(0.818);transform-origin:0 0;">Exterior</span>
<div class="abs" style="left:1811.5px;top:1278.7px;width:11px;height:11.299999999999955px;box-sizing:border-box;background:#f0f0f0;border:1px solid;border-color:#fff #404040 #404040 #fff"></div><div class="abs" style="left:1814.0px;top:1282.85px;width:0;height:0;border-left:3px solid transparent;border-right:3px solid transparent;border-top:3px solid #000"></div>
<div class="abs" style="left:1879px;top:1278.7px;width:11px;height:11.299999999999955px;box-sizing:border-box;background:#f0f0f0;border:1px solid;border-color:#fff #404040 #404040 #fff"></div><div class="abs" style="left:1881.5px;top:1282.85px;width:0;height:0;border-left:3px solid transparent;border-right:3px solid transparent;border-top:3px solid #000"></div>
<span class="t " style="left:1262px;top:1290.5px;font-weight:bold;transform:scaleX(0.9);transform-origin:0 0;">4</span>
<span class="t " style="left:1329.2271484375px;top:1290.5px;color:#000;font-weight:bold;transform:scaleX(0.9);transform-origin:0 0;">10.00</span>
<span class="t " style="left:1370.7216796875px;top:1290.5px;color:#000;font-weight:bold;transform:scaleX(0.9);transform-origin:0 0;">216.00</span>
<span class="t " style="left:1430.2326171875px;top:1290.5px;color:#000;font-weight:bold;transform:scaleX(0.9);transform-origin:0 0;">8.00</span>
<span class="t " style="left:1502.2216796875px;top:1290.5px;color:#0000ff;font-weight:bold;transform:scaleX(0.9);transform-origin:0 0;">100.00</span>
<span class="t " style="left:1563.2326171875px;top:1290.5px;color:#000;font-weight:bold;transform:scaleX(0.9);transform-origin:0 0;">0.00</span>
<span class="t " style="left:1708.7326171875px;top:1290.5px;color:#0000ff;font-weight:bold;transform:scaleX(0.9);transform-origin:0 0;">0.00</span>
<span class="t " style="left:1733.7216796875px;top:1290.5px;color:#0000ff;font-weight:bold;transform:scaleX(0.9);transform-origin:0 0;">100.00</span>
<span class="t " style="left:1768.5px;top:1290.5px;color:#000;font-weight:bold;transform:scaleX(0.818);transform-origin:0 0;">Exterior</span>
<span class="t " style="left:1826px;top:1290.5px;color:#000;font-weight:bold;transform:scaleX(0.818);transform-origin:0 0;">Exterior</span>
<div class="abs" style="left:1811.5px;top:1291.5px;width:11px;height:11.299999999999955px;box-sizing:border-box;background:#f0f0f0;border:1px solid;border-color:#fff #404040 #404040 #fff"></div><div class="abs" style="left:1814.0px;top:1295.65px;width:0;height:0;border-left:3px solid transparent;border-right:3px solid transparent;border-top:3px solid #000"></div>
<div class="abs" style="left:1879px;top:1291.5px;width:11px;height:11.299999999999955px;box-sizing:border-box;background:#f0f0f0;border:1px solid;border-color:#fff #404040 #404040 #fff"></div><div class="abs" style="left:1881.5px;top:1295.65px;width:0;height:0;border-left:3px solid transparent;border-right:3px solid transparent;border-top:3px solid #000"></div>
<div class="abs" style="left:1432px;top:1322px;width:64px;height:25px;box-sizing:border-box;border:1px solid;border-color:#fff #696969 #696969 #fff;box-shadow:inset -1px -1px 0 #a0a0a0;background:#f0f0f0"></div>
<span class="t " style="left:1446.443671875px;top:1328.0px;transform:scaleX(0.87);transform-origin:0 0;">&lt;&lt; <u>B</u>ack</span>
<div class="abs" style="left:1509px;top:1322px;width:64px;height:25px;box-sizing:border-box;border:1px solid;border-color:#fff #696969 #696969 #fff;box-shadow:inset -1px -1px 0 #a0a0a0;background:#f0f0f0"></div>
<span class="t " style="left:1534.08587890625px;top:1328.0px;transform:scaleX(0.87);transform-origin:0 0;"><u>O</u>K</span>
<div class="abs" style="left:1586px;top:1322px;width:64px;height:25px;box-sizing:border-box;border:1px solid;border-color:#fff #696969 #696969 #fff;box-shadow:inset -1px -1px 0 #a0a0a0;background:#f0f0f0"></div>
<span class="t " style="left:1603.10634765625px;top:1328.0px;transform:scaleX(0.87);transform-origin:0 0;"><u>C</u>ancel</span>
<div class="abs" style="left:1662.5px;top:1322px;width:64.5px;height:25px;box-sizing:border-box;border:1px solid #000;background:#f0f0f0"></div>
<div class="abs" style="left:1663.5px;top:1323px;width:62.5px;height:23px;box-sizing:border-box;border:1px solid;border-color:#fff #696969 #696969 #fff;box-shadow:inset -1px -1px 0 #a0a0a0"></div>
<span class="t " style="left:1677.993154296875px;top:1328.0px;transform:scaleX(0.87);transform-origin:0 0;"><u>N</u>ext &gt;&gt;</span></div></div>
<div class="abs" style="left:1455px;top:734px;width:799px;height:410px;box-sizing:border-box;border:1px solid #8d979f;border-radius:6px 6px 1px 1px;background:linear-gradient(#bfcee0,#dbe8f5 26px,#dbe8f5);box-shadow:inset 0 1px 0 rgba(255,255,255,.35)"></div>
<div class="abs" style="left:1461px;top:759px;width:787px;height:379px;background:#f0f0f0"></div>
<span class="t" style="left:1464px;top:744px;font-size:6px;font-style:italic;color:#c8c8c8;letter-spacing:-.3px">pult</span>
<span class="t " style="left:1479px;top:742.5px;font-size:12px;color:#a9b1bb;transform:scaleX(0.749);transform-origin:0 0;">Loads</span>
<div class="abs" style="left:2166px;top:742.250px;width:25px;height:14.500px;box-sizing:border-box;border:1px solid #a3b3c8;border-radius:3px;background:linear-gradient(#cad8e8,#c6d5e7);box-shadow:inset 0 0 0 1px rgba(255,255,255,.25)"></div>
<div class="abs" style="left:2174.0px;top:749px;width:9px;height:4px;box-sizing:border-box;border:1px solid #8b95a3;border-radius:2px;background:#fff"></div>
<div class="abs" style="left:2193.25px;top:742.250px;width:25.0px;height:14.500px;box-sizing:border-box;border:1px solid #a3b3c8;border-radius:3px;background:linear-gradient(#cad8e8,#c6d5e7);box-shadow:inset 0 0 0 1px rgba(255,255,255,.25)"></div>
<div class="abs" style="left:2201.25px;top:745px;width:9px;height:8px;box-sizing:border-box;border:1px solid #8b95a3;border-radius:1px;background:#fff"></div><div class="abs" style="left:2203.75px;top:747.500px;width:4px;height:3px;box-sizing:border-box;border:1px solid #8b95a3;background:#b4c0d0"></div>
<div class="abs" style="left:2220.5px;top:742.250px;width:25.0px;height:14.500px;box-sizing:border-box;border:1px solid #a3b3c8;border-radius:3px;background:linear-gradient(#cad8e8,#c6d5e7);box-shadow:inset 0 0 0 1px rgba(255,255,255,.25)"></div>
<svg class="abs" style="left:2227.5px;top:744.500px" width="11" height="10" viewBox="0 0 11 10"><path d="M2 1.500L9 8.500M9 1.500L2 8.500" stroke="#8b95a3" stroke-width="3.400" stroke-linecap="round"/><path d="M2 1.500L9 8.500M9 1.500L2 8.500" stroke="#fff" stroke-width="1.700" stroke-linecap="round"/></svg>
<div class="abs" style="left:1461px;top:759px;width:787px;height:379px;overflow:hidden"><div class="abs" style="left:-1461px;top:-759px;width:2560px;height:1440px"><div class="abs" style="left:1469px;top:765px;width:178px;height:53.200000000000045px;box-sizing:border-box;border:1px solid #fff"></div>
<div class="abs" style="left:1468px;top:764px;width:178px;height:53.200000000000045px;box-sizing:border-box;border:1px solid #b2b2b2"></div>
<div class="abs" style="left:1473.5px;top:763px;width:23px;height:4px;background:#f0f0f0"></div>
<span class="t " style="left:1475.5px;top:758.18px;transform:scaleX(0.758);transform-origin:0 0;">Units</span>
<span class="t " style="left:1481px;top:771px;transform:scaleX(0.806);transform-origin:0 0;">a =ft</span>
<span class="t " style="left:1525.5px;top:771px;transform:scaleX(0.836);transform-origin:0 0;">w  = k/ft²</span>
<span class="t " style="left:1481px;top:783.8px;transform:scaleX(0.806);transform-origin:0 0;">b =ft</span>
<span class="t " style="left:1525.5px;top:783.8px;transform:scaleX(0.812);transform-origin:0 0;">P1 = k/ft</span>
<span class="t " style="left:1481px;top:796.6px;transform:scaleX(0.830);transform-origin:0 0;">c =ft</span>
<span class="t " style="left:1525.5px;top:796.6px;transform:scaleX(0.812);transform-origin:0 0;">P2 = k/ft</span>
<span class="t " style="left:1589.5px;top:771px;transform:scaleX(0.799);transform-origin:0 0;">M =  k-ft</span>
<span class="t " style="left:1589.5px;top:783.8px;transform:scaleX(0.794);transform-origin:0 0;">F =   k</span>
<div class="abs" style="left:1654.5px;top:765px;width:374.0px;height:53.200000000000045px;box-sizing:border-box;border:1px solid #fff"></div>
<div class="abs" style="left:1653.5px;top:764px;width:374.0px;height:53.200000000000045px;box-sizing:border-box;border:1px solid #b2b2b2"></div>
<div class="abs" style="left:1659px;top:763px;width:33.5px;height:4px;background:#f0f0f0"></div>
<span class="t " style="left:1661px;top:758.18px;transform:scaleX(0.804);transform-origin:0 0;">Legend</span>
<span class="t " style="left:1666.5px;top:771px;transform:scaleX(0.784);transform-origin:0 0;">SW = Selfweight</span>
<span class="t " style="left:1807.5px;top:771px;transform:scaleX(0.769);transform-origin:0 0;">CL  = Cantilever Left</span>
<span class="t " style="left:1666.5px;top:783.8px;transform:scaleX(0.791);transform-origin:0 0;">LL = Live Load</span>
<span class="t " style="left:1807.5px;top:783.8px;transform:scaleX(0.765);transform-origin:0 0;">CR  = Cantilever Right</span>
<span class="t " style="left:1666.5px;top:796.6px;transform:scaleX(0.770);transform-origin:0 0;"> X = Other user defined load case</span>
<span class="t " style="left:1807.5px;top:796.6px;transform:scaleX(0.775);transform-origin:0 0;">SDL = Superimposed Dead Load</span>
<span class="t " style="left:1916px;top:771px;transform:scaleX(0.817);transform-origin:0 0;">L/T-? = Load Type</span>
<div class="abs" style="left:2038.5px;top:765px;width:160.0px;height:53.200000000000045px;box-sizing:border-box;border:1px solid #fff"></div>
<div class="abs" style="left:2037.5px;top:764px;width:160.0px;height:53.200000000000045px;box-sizing:border-box;border:1px solid #b2b2b2"></div>
<span class="t " style="left:2044px;top:771px;transform:scaleX(0.797);transform-origin:0 0;">Skip Live Load</span>
<div class="abs" style="left:2120.5px;top:773px;width:10px;height:10px;box-sizing:border-box;border-radius:50%;border:1px solid;border-color:#808080 #fff #fff #808080;background:#fff;box-shadow:inset .7px .7px 0 #555,0 0 0 .5px #e6e6e6"></div>
<span class="t " style="left:2135px;top:772px;transform:scaleX(0.864);transform-origin:0 0;">Yes</span>
<div class="abs" style="left:2159.5px;top:773px;width:10px;height:10px;box-sizing:border-box;border-radius:50%;border:1px solid;border-color:#808080 #fff #fff #808080;background:#fff;box-shadow:inset .7px .7px 0 #555,0 0 0 .5px #e6e6e6"></div><div class="abs" style="left:2162.8px;top:776.3px;width:3.400px;height:3.400px;border-radius:50%;background:#000"></div>
<span class="t " style="left:2174px;top:772px;transform:scaleX(0.818);transform-origin:0 0;">No</span>
<span class="t " style="left:2044px;top:790.5px;color:#8c8c8c;transform:scaleX(0.784);transform-origin:0 0;">Skip Factor:</span>
<div class="abs" style="left:2101.5px;top:791px;width:57.5px;height:14px;box-sizing:border-box;border:1px solid;border-color:#a0a0a0 #fff #fff #a0a0a0;background:#6e6e6e;box-shadow:inset 1px 1px 0 #696969"></div>
<div class="abs" style="left:2038.5px;top:822.9px;width:160.0px;height:78.60000000000002px;box-sizing:border-box;border:1px solid #fff"></div>
<div class="abs" style="left:2037.5px;top:821.9px;width:160.0px;height:78.60000000000002px;box-sizing:border-box;border:1px solid #b2b2b2"></div>
<span class="t " style="left:2044px;top:828.5px;transform:scaleX(0.790);transform-origin:0 0;">Include Selfweight</span>
<div class="abs" style="left:2120.5px;top:830.5px;width:10px;height:10px;box-sizing:border-box;border-radius:50%;border:1px solid;border-color:#808080 #fff #fff #808080;background:#fff;box-shadow:inset .7px .7px 0 #555,0 0 0 .5px #e6e6e6"></div>
<span class="t " style="left:2135px;top:829.5px;transform:scaleX(0.864);transform-origin:0 0;">Yes</span>
<div class="abs" style="left:2159.5px;top:830.5px;width:10px;height:10px;box-sizing:border-box;border-radius:50%;border:1px solid;border-color:#808080 #fff #fff #808080;background:#fff;box-shadow:inset .7px .7px 0 #555,0 0 0 .5px #e6e6e6"></div><div class="abs" style="left:2162.8px;top:833.8px;width:3.400px;height:3.400px;border-radius:50%;background:#000"></div>
<span class="t " style="left:2174px;top:829.5px;transform:scaleX(0.818);transform-origin:0 0;">No</span>
<span class="t " style="left:2044px;top:854.3px;color:#8c8c8c;transform:scaleX(0.781);transform-origin:0 0;">Unit Weight :</span>
<div class="abs" style="left:2101.5px;top:852.5px;width:57.5px;height:14.5px;box-sizing:border-box;border:1px solid;border-color:#a0a0a0 #fff #fff #a0a0a0;background:#6e6e6e;box-shadow:inset 1px 1px 0 #696969"></div>
<span class="t " style="left:2143.5px;top:854px;color:#161616;transform:scaleX(0.790);transform-origin:0 0;">150</span>
<span class="t " style="left:2166px;top:854.3px;transform:scaleX(0.852);transform-origin:0 0;">pcf</span>
<div class="abs" style="left:2044px;top:882px;width:10px;height:10px;box-sizing:border-box;border:1px solid;border-color:#a0a0a0 #fff #fff #a0a0a0;background:#f0f0f0"></div><svg class="abs" style="left:2045px;top:883px" width="8" height="8" viewBox="0 0 8 8"><path d="M1 3.500L3 6L7 1" fill="none" stroke="#a0a0a0" stroke-width="1.400"/></svg>
<span class="t " style="left:2058px;top:881.3px;color:#a0a0a0;transform:scaleX(0.788);transform-origin:0 0;">Use Concrete Unit Weight</span>
<div class="abs" style="left:1468.75px;top:823.500px;width:66.75px;height:61px;box-sizing:border-box;background:#fff;border:1px solid;border-color:#a0a0a0 #fff #fff #a0a0a0;box-shadow:inset 1px 1px 0 #b4b4b4"></div>
<div class="abs" style="left:1539.5px;top:823.500px;width:66.0px;height:61px;box-sizing:border-box;background:#fff;border:1px solid;border-color:#a0a0a0 #fff #fff #a0a0a0;box-shadow:inset 1px 1px 0 #b4b4b4"></div>
<div class="abs" style="left:1609.5px;top:823.500px;width:66.0px;height:61px;box-sizing:border-box;background:#fff;border:1px solid;border-color:#a0a0a0 #fff #fff #a0a0a0;box-shadow:inset 1px 1px 0 #b4b4b4"></div>
<div class="abs" style="left:1679.5px;top:823.500px;width:66.25px;height:61px;box-sizing:border-box;background:#fff;border:1px solid;border-color:#a0a0a0 #fff #fff #a0a0a0;box-shadow:inset 1px 1px 0 #b4b4b4"></div>
<div class="abs" style="left:1750px;top:823.500px;width:66.25px;height:61px;box-sizing:border-box;background:#fff;border:1px solid;border-color:#a0a0a0 #fff #fff #a0a0a0;box-shadow:inset 1px 1px 0 #b4b4b4"></div>
<div class="abs" style="left:1820.5px;top:823.500px;width:66.25px;height:61px;box-sizing:border-box;background:#fff;border:1px solid;border-color:#a0a0a0 #fff #fff #a0a0a0;box-shadow:inset 1px 1px 0 #b4b4b4"></div>
<div class="abs" style="left:1890.75px;top:823.500px;width:66.25px;height:61px;box-sizing:border-box;background:#fff;border:1px solid;border-color:#a0a0a0 #fff #fff #a0a0a0;box-shadow:inset 1px 1px 0 #b4b4b4"></div>
<div class="abs" style="left:1961.25px;top:823.500px;width:66.25px;height:61px;box-sizing:border-box;background:#fff;border:1px solid;border-color:#a0a0a0 #fff #fff #a0a0a0;box-shadow:inset 1px 1px 0 #b4b4b4"></div>
<div class="abs" style="left:1493.5px;top:887.8px;width:18.0px;height:10.200000000000045px;background:#e2e2e2;"></div>
<span class="t " style="left:1494.725px;top:886.5px;font-size:10px;font-weight:bold;transform:scaleX(0.888);transform-origin:0 0;">L-U</span>
<span class="t " style="left:1565.1px;top:886.5px;font-size:10px;font-weight:bold;transform:scaleX(0.919);transform-origin:0 0;">L-P</span>
<span class="t " style="left:1635.1px;top:886.5px;font-size:10px;font-weight:bold;transform:scaleX(0.888);transform-origin:0 0;">L-C</span>
<span class="t " style="left:1705.225px;top:886.5px;font-size:10px;font-weight:bold;transform:scaleX(0.833);transform-origin:0 0;">L-M</span>
<span class="t " style="left:1775.725px;top:886.5px;font-size:10px;font-weight:bold;transform:scaleX(0.952);transform-origin:0 0;">L-L</span>
<span class="t " style="left:1846.225px;top:886.5px;font-size:10px;font-weight:bold;transform:scaleX(0.919);transform-origin:0 0;">T-R</span>
<span class="t " style="left:1916.475px;top:886.5px;font-size:10px;font-weight:bold;transform:scaleX(0.951);transform-origin:0 0;">T-V</span>
<span class="t " style="left:1986.975px;top:886.5px;font-size:10px;font-weight:bold;letter-spacing:-0.07px;">T-Z</span>
<svg class="abs" style="left:1464px;top:818px" width="286" height="84" viewBox="0 0 2560 752" font-family="Liberation Sans, sans-serif" fill="#222"><path d="M95 431.0H610" stroke="#3c6cff" stroke-width="22"/><path d="M113 406L87 431.0L113 456 M592 406L618 431.0L592 456" stroke="#222" stroke-width="6" fill="none"/><path d="M135 446L167 476H103Z" fill="#eee" stroke="#444" stroke-width="6"/><path d="M545 446L577 476H513Z" fill="#eee" stroke="#444" stroke-width="6"/><path d="M140 410V295H520V410 M140 295L180 255H570L520 295 M325 295V410" stroke="#222" stroke-width="6" fill="none"/><path d="M225 295V405 M203 377L225 405L247 377" stroke="#222" stroke-width="6" fill="none"/><path d="M430 295V405 M408 377L430 405L452 377" stroke="#222" stroke-width="6" fill="none"/><path d="M570 255V375 M548 347L570 375L592 347" stroke="#222" stroke-width="6" fill="none"/><text x="280" y="238" font-size="95">w</text><text x="240" y="582" font-size="84" textLength="255" lengthAdjust="spacingAndGlyphs">Uniform</text><path d="M725 463.0H1240" stroke="#e060e0" stroke-width="26"/><path d="M743 436L717 463.0L743 490 M1222 436L1248 463.0L1222 490" stroke="#222" stroke-width="6" fill="none"/><path d="M765 478L797 508H733Z" fill="#eee" stroke="#444" stroke-width="6"/><path d="M1180 478L1212 508H1148Z" fill="#eee" stroke="#444" stroke-width="6"/><path d="M745 160H1180 M745 285H950 M765 145V450 M930 270V440 M1155 145V440 M930 445V370H1155 M930 370L975 325H1195L1155 370 M1010 370V445 M1085 370V445" stroke="#222" stroke-width="6" fill="none"/><path d="M749 174L781 146" stroke="#222" stroke-width="5"/><path d="M1139 174L1171 146" stroke="#222" stroke-width="5"/><path d="M749 299L781 271" stroke="#222" stroke-width="5"/><path d="M914 299L946 271" stroke="#222" stroke-width="5"/><path d="M930 370V440 M908 412L930 440L952 412" stroke="#222" stroke-width="6" fill="none"/><path d="M1155 370V440 M1133 412L1155 440L1177 412" stroke="#222" stroke-width="6" fill="none"/><path d="M1195 325V410 M1173 382L1195 410L1217 382" stroke="#222" stroke-width="6" fill="none"/><text x="935" y="150" font-size="95">b</text><text x="815" y="265" font-size="95">a</text><text x="1015" y="318" font-size="95">w</text><text x="755" y="582" font-size="84" textLength="485" lengthAdjust="spacingAndGlyphs">Partial Uniform</text><path d="M1355 390.0H1850" stroke="#10a080" stroke-width="24"/><path d="M1373 364L1347 390.0L1373 416 M1832 364L1858 390.0L1832 416" stroke="#222" stroke-width="6" fill="none"/><path d="M1400 404L1432 434H1368Z" fill="#eee" stroke="#444" stroke-width="6"/><path d="M1790 404L1822 434H1758Z" fill="#eee" stroke="#444" stroke-width="6"/><path d="M1380 255H1660 M1400 240V355" stroke="#222" stroke-width="6" fill="none"/><path d="M1384 269L1416 241" stroke="#222" stroke-width="5"/><path d="M1665 235V345" stroke="#000" stroke-width="18"/><path d="M1630 345H1700L1665 378Z" fill="#fff" stroke="#222" stroke-width="6"/><text x="1505" y="240" font-size="95">a</text><text x="1690" y="265" font-size="70">F</text><text x="1385" y="582" font-size="84" textLength="455" lengthAdjust="spacingAndGlyphs">Concentrated</text><path d="M1985 399.0H2480" stroke="#c89010" stroke-width="22"/><path d="M2003 374L1977 399.0L2003 424 M2462 374L2488 399.0L2462 424" stroke="#222" stroke-width="6" fill="none"/><path d="M2035 412L2067 442H2003Z" fill="#eee" stroke="#444" stroke-width="6"/><path d="M2420 412L2452 442H2388Z" fill="#eee" stroke="#444" stroke-width="6"/><path d="M2005 235H2335 M2030 220V365 M2305 220V285 M2262 420A40 40 0 1 0 2300 355 M2280 340L2300 320V375L2280 345" stroke="#222" stroke-width="6" fill="none"/><path d="M2014 249L2046 221" stroke="#222" stroke-width="5"/><path d="M2289 249L2321 221" stroke="#222" stroke-width="5"/><text x="2155" y="218" font-size="95">a</text><text x="2360" y="358" font-size="58">M</text><text x="2100" y="582" font-size="84" textLength="270" lengthAdjust="spacingAndGlyphs">Moment</text></svg>
<svg class="abs" style="left:1746px;top:818px" width="286" height="84" viewBox="0 0 2560 752" font-family="Liberation Sans, sans-serif" fill="#222"><path d="M85 490.0H605" stroke="#10c0c0" stroke-width="24"/><path d="M103 464L77 490.0L103 516 M587 464L613 490.0L587 516" stroke="#222" stroke-width="6" fill="none"/><path d="M135 504L167 534H103Z" fill="#eee" stroke="#444" stroke-width="6"/><path d="M560 504L592 534H528Z" fill="#eee" stroke="#444" stroke-width="6"/><path d="M110 212H545 M110 298H405 M135 198V475 M380 285V400 M515 198V400 M380 470V400H515V470" stroke="#222" stroke-width="6" fill="none"/><path d="M119 226L151 198" stroke="#222" stroke-width="5"/><path d="M499 226L531 198" stroke="#222" stroke-width="5"/><path d="M119 312L151 284" stroke="#222" stroke-width="5"/><path d="M364 312L396 284" stroke="#222" stroke-width="5"/><path d="M380 400V470 M358 442L380 470L402 442" stroke="#222" stroke-width="6" fill="none"/><path d="M450 400V470 M428 442L450 470L472 442" stroke="#222" stroke-width="6" fill="none"/><path d="M515 400V470 M493 442L515 470L537 442" stroke="#222" stroke-width="6" fill="none"/><text x="300" y="200" font-size="95">b</text><text x="228" y="288" font-size="95">a</text><text x="425" y="365" font-size="90">P</text><text x="470" y="390" font-size="45" font-weight="bold">1</text><text x="270" y="582" font-size="84" textLength="140" lengthAdjust="spacingAndGlyphs">Line</text><path d="M720 390.0H1230" stroke="#ffb020" stroke-width="24"/><path d="M738 364L712 390.0L738 416 M1212 364L1238 390.0L1212 416" stroke="#222" stroke-width="6" fill="none"/><path d="M770 404L802 434H738Z" fill="#eee" stroke="#444" stroke-width="6"/><path d="M1170 404L1202 434H1138Z" fill="#eee" stroke="#444" stroke-width="6"/><path d="M740 150H1150 M750 270H860 M765 135V355 M840 255V370 M1130 135V330 M835 375L980 230L1130 375 M905 305V370 M1055 305V370" stroke="#222" stroke-width="6" fill="none"/><path d="M749 164L781 136" stroke="#222" stroke-width="5"/><path d="M1114 164L1146 136" stroke="#222" stroke-width="5"/><path d="M749 284L781 256" stroke="#222" stroke-width="5"/><path d="M824 284L856 256" stroke="#222" stroke-width="5"/><path d="M980 230V370 M958 342L980 370L1002 342" stroke="#222" stroke-width="6" fill="none"/><text x="925" y="138" font-size="95">b</text><text x="680" y="295" font-size="95">a</text><text x="1140" y="275" font-size="90">P</text><text x="1160" y="305" font-size="45" font-weight="bold">1</text><text x="845" y="582" font-size="84" textLength="260" lengthAdjust="spacingAndGlyphs">Triangle</text><path d="M1340 428.5H1865" stroke="#b040ff" stroke-width="27"/><path d="M1358 401L1332 428.5L1358 456 M1847 401L1873 428.5L1847 456" stroke="#222" stroke-width="6" fill="none"/><path d="M1385 444L1417 474H1353Z" fill="#eee" stroke="#444" stroke-width="6"/><path d="M1810 444L1842 474H1778Z" fill="#eee" stroke="#444" stroke-width="6"/><path d="M1360 175H1795 M1360 262H1680 M1385 160V390 M1655 250V410 M1775 160V410 M1655 340L1775 310 M1715 325V410" stroke="#222" stroke-width="6" fill="none"/><path d="M1369 189L1401 161" stroke="#222" stroke-width="5"/><path d="M1759 189L1791 161" stroke="#222" stroke-width="5"/><path d="M1369 276L1401 248" stroke="#222" stroke-width="5"/><path d="M1639 276L1671 248" stroke="#222" stroke-width="5"/><path d="M1655 340V410 M1633 382L1655 410L1677 382" stroke="#222" stroke-width="6" fill="none"/><path d="M1715 325V410 M1693 382L1715 410L1737 382" stroke="#222" stroke-width="6" fill="none"/><path d="M1775 310V410 M1753 382L1775 410L1797 382" stroke="#222" stroke-width="6" fill="none"/><text x="1538" y="160" font-size="95">b</text><text x="1495" y="250" font-size="95">a</text><text x="1588" y="355" font-size="85">P</text><text x="1620" y="375" font-size="42" font-weight="bold">1</text><text x="1795" y="315" font-size="85">P</text><text x="1835" y="345" font-size="42" font-weight="bold">2</text><text x="1465" y="582" font-size="84" textLength="270" lengthAdjust="spacingAndGlyphs">Variable</text><path d="M1985 446.0H2495" stroke="#f09030" stroke-width="28"/><path d="M2003 418L1977 446.0L2003 474 M2477 418L2503 446.0L2477 474" stroke="#222" stroke-width="6" fill="none"/><path d="M2035 462L2067 492H2003Z" fill="#eee" stroke="#444" stroke-width="6"/><path d="M2450 462L2482 492H2418Z" fill="#eee" stroke="#444" stroke-width="6"/><path d="M2010 208H2435 M2010 298H2290 M2030 195V430 M2195 285V420 M2265 285V360 M2415 195V290 M2190 430L2265 360H2345L2415 430 M2305 360V430" stroke="#222" stroke-width="6" fill="none"/><path d="M2014 222L2046 194" stroke="#222" stroke-width="5"/><path d="M2399 222L2431 194" stroke="#222" stroke-width="5"/><path d="M2014 312L2046 284" stroke="#222" stroke-width="5"/><path d="M2179 312L2211 284" stroke="#222" stroke-width="5"/><path d="M2249 312L2281 284" stroke="#222" stroke-width="5"/><path d="M2265 360V428 M2243 400L2265 428L2287 400" stroke="#222" stroke-width="6" fill="none"/><path d="M2345 360V428 M2323 400L2345 428L2367 400" stroke="#222" stroke-width="6" fill="none"/><text x="2183" y="190" font-size="95">b</text><text x="2082" y="285" font-size="95">a</text><text x="2285" y="320" font-size="90">c</text><text x="2385" y="385" font-size="70">P</text><text x="2412" y="405" font-size="40" font-weight="bold">1</text><text x="2055" y="582" font-size="84" textLength="385" lengthAdjust="spacingAndGlyphs">Trapezoidal</text></svg>
<div class="abs" style="left:1468px;top:906.5px;width:773.5px;height:192.5px;background:#c0c0c0;box-shadow:inset 1px 1px 0 #808080"></div>
<div class="abs" style="left:1468.5px;top:907px;width:753.0px;height:12.5px;background:#f0f0f0;"></div>
<div class="abs" style="left:1468.5px;top:919.5px;width:26.0px;height:178.75px;background:#f0f0f0;"></div>
<div class="abs" style="left:1494.5px;top:919.5px;width:727.0px;height:178.75px;background:#fff;"></div>
<div class="abs" style="left:1468.5px;top:919.0px;width:201.5px;height:1.0px;background:#3a3a3a;"></div>
<div class="abs" style="left:1670px;top:919.0px;width:473.5px;height:1.0px;background:#ffa64d;"></div>
<div class="abs" style="left:2143.5px;top:919.0px;width:78.0px;height:1.0px;background:#3a3a3a;"></div>
<div class="abs" style="left:1468.5px;top:931.7678571428571px;width:201.5px;height:1.0px;background:#3a3a3a;"></div>
<div class="abs" style="left:1670px;top:931.7678571428571px;width:473.5px;height:1.0px;background:#ffa64d;"></div>
<div class="abs" style="left:2143.5px;top:931.7678571428571px;width:78.0px;height:1.0px;background:#3a3a3a;"></div>
<div class="abs" style="left:1468.5px;top:944.5357142857143px;width:201.5px;height:1.0px;background:#3a3a3a;"></div>
<div class="abs" style="left:1670px;top:944.5357142857143px;width:473.5px;height:1.0px;background:#ffa64d;"></div>
<div class="abs" style="left:2143.5px;top:944.5357142857143px;width:78.0px;height:1.0px;background:#3a3a3a;"></div>
<div class="abs" style="left:1468.5px;top:957.3035714285714px;width:201.5px;height:1.0px;background:#3a3a3a;"></div>
<div class="abs" style="left:1670px;top:957.3035714285714px;width:473.5px;height:1.0px;background:#ffa64d;"></div>
<div class="abs" style="left:2143.5px;top:957.3035714285714px;width:78.0px;height:1.0px;background:#3a3a3a;"></div>
<div class="abs" style="left:1468.5px;top:970.0714285714286px;width:201.5px;height:1.0px;background:#3a3a3a;"></div>
<div class="abs" style="left:1670px;top:970.0714285714286px;width:473.5px;height:1.0px;background:#ffa64d;"></div>
<div class="abs" style="left:2143.5px;top:970.0714285714286px;width:78.0px;height:1.0px;background:#3a3a3a;"></div>
<div class="abs" style="left:1468.5px;top:982.8392857142857px;width:201.5px;height:1.0px;background:#3a3a3a;"></div>
<div class="abs" style="left:1670px;top:982.8392857142857px;width:473.5px;height:1.0px;background:#ffa64d;"></div>
<div class="abs" style="left:2143.5px;top:982.8392857142857px;width:78.0px;height:1.0px;background:#3a3a3a;"></div>
<div class="abs" style="left:1468.5px;top:995.6071428571429px;width:201.5px;height:1.0px;background:#3a3a3a;"></div>
<div class="abs" style="left:1670px;top:995.6071428571429px;width:473.5px;height:1.0px;background:#ffa64d;"></div>
<div class="abs" style="left:2143.5px;top:995.6071428571429px;width:78.0px;height:1.0px;background:#3a3a3a;"></div>
<div class="abs" style="left:1468.5px;top:1008.375px;width:201.5px;height:1.0px;background:#3a3a3a;"></div>
<div class="abs" style="left:1670px;top:1008.375px;width:473.5px;height:1.0px;background:#ffa64d;"></div>
<div class="abs" style="left:2143.5px;top:1008.375px;width:78.0px;height:1.0px;background:#3a3a3a;"></div>
<div class="abs" style="left:1468.5px;top:1021.1428571428571px;width:201.5px;height:1.0px;background:#3a3a3a;"></div>
<div class="abs" style="left:1670px;top:1021.1428571428571px;width:473.5px;height:1.0px;background:#ffa64d;"></div>
<div class="abs" style="left:2143.5px;top:1021.1428571428571px;width:78.0px;height:1.0px;background:#3a3a3a;"></div>
<div class="abs" style="left:1468.5px;top:1033.9107142857142px;width:201.5px;height:1.0px;background:#3a3a3a;"></div>
<div class="abs" style="left:1670px;top:1033.9107142857142px;width:473.5px;height:1.0px;background:#ffa64d;"></div>
<div class="abs" style="left:2143.5px;top:1033.9107142857142px;width:78.0px;height:1.0px;background:#3a3a3a;"></div>
<div class="abs" style="left:1468.5px;top:1046.6785714285713px;width:201.5px;height:1.0px;background:#3a3a3a;"></div>
<div class="abs" style="left:1670px;top:1046.6785714285713px;width:473.5px;height:1.0px;background:#ffa64d;"></div>
<div class="abs" style="left:2143.5px;top:1046.6785714285713px;width:78.0px;height:1.0px;background:#3a3a3a;"></div>
<div class="abs" style="left:1468.5px;top:1059.4464285714284px;width:201.5px;height:1.0px;background:#3a3a3a;"></div>
<div class="abs" style="left:1670px;top:1059.4464285714284px;width:473.5px;height:1.0px;background:#ffa64d;"></div>
<div class="abs" style="left:2143.5px;top:1059.4464285714284px;width:78.0px;height:1.0px;background:#3a3a3a;"></div>
<div class="abs" style="left:1468.5px;top:1072.2142857142858px;width:201.5px;height:1.0px;background:#3a3a3a;"></div>
<div class="abs" style="left:1670px;top:1072.2142857142858px;width:473.5px;height:1.0px;background:#ffa64d;"></div>
<div class="abs" style="left:2143.5px;top:1072.2142857142858px;width:78.0px;height:1.0px;background:#3a3a3a;"></div>
<div class="abs" style="left:1468.5px;top:1084.982142857143px;width:201.5px;height:1.0px;background:#3a3a3a;"></div>
<div class="abs" style="left:1670px;top:1084.982142857143px;width:473.5px;height:1.0px;background:#ffa64d;"></div>
<div class="abs" style="left:2143.5px;top:1084.982142857143px;width:78.0px;height:1.0px;background:#3a3a3a;"></div>
<div class="abs" style="left:1468.5px;top:1097.75px;width:201.5px;height:1.0px;background:#3a3a3a;"></div>
<div class="abs" style="left:1670px;top:1097.75px;width:473.5px;height:1.0px;background:#ffa64d;"></div>
<div class="abs" style="left:2143.5px;top:1097.75px;width:78.0px;height:1.0px;background:#3a3a3a;"></div>
<div class="abs" style="left:1468.5px;top:906.5px;width:753.0px;height:1.0px;background:#808080;"></div>
<div class="abs" style="left:1468.0px;top:907px;width:1.0px;height:191.25px;background:#3a3a3a;"></div>
<div class="abs" style="left:1494.0px;top:907px;width:1.0px;height:191.25px;background:#3a3a3a;"></div>
<div class="abs" style="left:1554.5px;top:907px;width:1.0px;height:191.25px;background:#3a3a3a;"></div>
<div class="abs" style="left:1615.5px;top:907px;width:1.0px;height:191.25px;background:#3a3a3a;"></div>
<div class="abs" style="left:1669.5px;top:907px;width:1.0px;height:191.25px;background:#ffa64d;"></div>
<div class="abs" style="left:1728.5px;top:907px;width:1.0px;height:191.25px;background:#ffa64d;"></div>
<div class="abs" style="left:1789.0px;top:907px;width:1.0px;height:191.25px;background:#ffa64d;"></div>
<div class="abs" style="left:1849.0px;top:907px;width:1.0px;height:191.25px;background:#ffa64d;"></div>
<div class="abs" style="left:1907.0px;top:907px;width:1.0px;height:191.25px;background:#ffa64d;"></div>
<div class="abs" style="left:1967.0px;top:907px;width:1.0px;height:191.25px;background:#ffa64d;"></div>
<div class="abs" style="left:2029.5px;top:907px;width:1.0px;height:191.25px;background:#ffa64d;"></div>
<div class="abs" style="left:2086.5px;top:907px;width:1.0px;height:191.25px;background:#ffa64d;"></div>
<div class="abs" style="left:2143.0px;top:907px;width:1.0px;height:191.25px;background:#3a3a3a;"></div>
<div class="abs" style="left:2221.0px;top:907px;width:1.0px;height:191.25px;background:#3a3a3a;"></div>
<div class="abs" style="left:1669.5px;top:907px;width:1.0px;height:12.5px;background:#ffa64d;"></div>
<div class="abs" style="left:1469.0px;top:907.500px;width:25.0px;height:11.500px;box-sizing:border-box;border-left:1px solid #fff;border-top:1px solid #fff"></div>
<div class="abs" style="left:1495.0px;top:907.500px;width:59.5px;height:11.500px;box-sizing:border-box;border-left:1px solid #fff;border-top:1px solid #fff"></div>
<span class="t " style="left:1512.64833984375px;top:907.5px;font-weight:bold;transform:scaleX(0.9);transform-origin:0 0;">Span</span>
<div class="abs" style="left:1555.5px;top:907.500px;width:60px;height:11.500px;box-sizing:border-box;border-left:1px solid #fff;border-top:1px solid #fff"></div>
<span class="t " style="left:1572.291796875px;top:907.5px;font-weight:bold;transform:scaleX(0.9);transform-origin:0 0;">Class</span>
<div class="abs" style="left:1616.5px;top:907.500px;width:53px;height:11.500px;box-sizing:border-box;border-left:1px solid #fff;border-top:1px solid #fff"></div>
<span class="t " style="left:1631.1787109375px;top:907.5px;font-weight:bold;transform:scaleX(0.9);transform-origin:0 0;">L/T-?</span>
<span class="t " style="left:1695.64951171875px;top:907.5px;font-weight:bold;transform:scaleX(0.9);transform-origin:0 0;">w</span>
<span class="t " style="left:1753.19521484375px;top:907.5px;font-weight:bold;transform:scaleX(0.9);transform-origin:0 0;">P1</span>
<span class="t " style="left:1813.44521484375px;top:907.5px;font-weight:bold;transform:scaleX(0.9);transform-origin:0 0;">P2</span>
<span class="t " style="left:1875.747265625px;top:907.5px;font-weight:bold;transform:scaleX(0.9);transform-origin:0 0;">a</span>
<span class="t " style="left:1934.4765625px;top:907.5px;font-weight:bold;transform:scaleX(0.9);transform-origin:0 0;">b</span>
<span class="t " style="left:1995.997265625px;top:907.5px;font-weight:bold;transform:scaleX(0.9);transform-origin:0 0;">c</span>
<span class="t " style="left:2054.376171875px;top:907.5px;font-weight:bold;transform:scaleX(0.9);transform-origin:0 0;">M</span>
<span class="t " style="left:2112.2265625px;top:907.5px;font-weight:bold;transform:scaleX(0.9);transform-origin:0 0;">F</span>
<div class="abs" style="left:2144.0px;top:907.500px;width:77.0px;height:11.500px;box-sizing:border-box;border-left:1px solid #fff;border-top:1px solid #fff"></div>
<span class="t " style="left:2169.57216796875px;top:907.5px;font-weight:bold;transform:scaleX(0.9);transform-origin:0 0;">Label</span>
<span class="t " style="left:1480.747265625px;top:920.7px;font-weight:bold;transform:scaleX(0.9);transform-origin:0 0;">1</span>
<div class="abs" style="left:1469px;top:919.5px;width:25px;height:11.767857142857142px;box-sizing:border-box;border-left:1px solid #fff;border-top:1px solid #fff"></div>
<div class="abs" style="left:1542px;top:920.0px;width:11px;height:11.267857142857142px;box-sizing:border-box;background:#f0f0f0;border:1px solid;border-color:#fff #404040 #404040 #fff"></div><div class="abs" style="left:1544.5px;top:924.1339285714286px;width:0;height:0;border-left:3px solid transparent;border-right:3px solid transparent;border-top:3px solid #000"></div>
<div class="abs" style="left:1603px;top:920.0px;width:11px;height:11.267857142857142px;box-sizing:border-box;background:#f0f0f0;border:1px solid;border-color:#fff #404040 #404040 #fff"></div><div class="abs" style="left:1605.5px;top:924.1339285714286px;width:0;height:0;border-left:3px solid transparent;border-right:3px solid transparent;border-top:3px solid #000"></div>
<span class="t " style="left:1497px;top:920.1px;font-weight:bold;transform:scaleX(0.9);transform-origin:0 0;">1</span>
<span class="t " style="left:1557.5px;top:920.1px;font-weight:bold;transform:scaleX(0.9);transform-origin:0 0;">SDL</span>
<span class="t " style="left:1617px;top:920.1px;color:#1a3cff;font-weight:bold;transform:scaleX(0.682);transform-origin:0 0;">L-U</span>
<span class="t " style="left:1701.7271484375px;top:920.1px;font-weight:bold;transform:scaleX(0.9);transform-origin:0 0;">0.250</span>
<span class="t " style="left:1480.747265625px;top:933.4678571428572px;font-weight:bold;transform:scaleX(0.9);transform-origin:0 0;">2</span>
<div class="abs" style="left:1469px;top:932.2678571428571px;width:25px;height:11.767857142857142px;box-sizing:border-box;border-left:1px solid #fff;border-top:1px solid #fff"></div>
<div class="abs" style="left:1542px;top:932.7678571428571px;width:11px;height:11.267857142857142px;box-sizing:border-box;background:#f0f0f0;border:1px solid;border-color:#fff #404040 #404040 #fff"></div><div class="abs" style="left:1544.5px;top:936.9017857142857px;width:0;height:0;border-left:3px solid transparent;border-right:3px solid transparent;border-top:3px solid #000"></div>
<div class="abs" style="left:1603px;top:932.7678571428571px;width:11px;height:11.267857142857142px;box-sizing:border-box;background:#f0f0f0;border:1px solid;border-color:#fff #404040 #404040 #fff"></div><div class="abs" style="left:1605.5px;top:936.9017857142857px;width:0;height:0;border-left:3px solid transparent;border-right:3px solid transparent;border-top:3px solid #000"></div>
<span class="t " style="left:1497px;top:932.8678571428571px;font-weight:bold;transform:scaleX(0.9);transform-origin:0 0;">1</span>
<span class="t " style="left:1557.5px;top:932.8678571428571px;font-weight:bold;transform:scaleX(0.9);transform-origin:0 0;">LL</span>
<span class="t " style="left:1617px;top:932.8678571428571px;color:#1a3cff;font-weight:bold;transform:scaleX(0.682);transform-origin:0 0;">L-U</span>
<span class="t " style="left:1701.7271484375px;top:932.8678571428571px;font-weight:bold;transform:scaleX(0.9);transform-origin:0 0;">0.120</span>
<span class="t " style="left:1480.747265625px;top:946.2357142857144px;font-weight:bold;transform:scaleX(0.9);transform-origin:0 0;">3</span>
<div class="abs" style="left:1469px;top:945.0357142857143px;width:25px;height:11.767857142857142px;box-sizing:border-box;border-left:1px solid #fff;border-top:1px solid #fff"></div>
<div class="abs" style="left:1542px;top:945.5357142857143px;width:11px;height:11.267857142857142px;box-sizing:border-box;background:#f0f0f0;border:1px solid;border-color:#fff #404040 #404040 #fff"></div><div class="abs" style="left:1544.5px;top:949.6696428571429px;width:0;height:0;border-left:3px solid transparent;border-right:3px solid transparent;border-top:3px solid #000"></div>
<div class="abs" style="left:1603px;top:945.5357142857143px;width:11px;height:11.267857142857142px;box-sizing:border-box;background:#f0f0f0;border:1px solid;border-color:#fff #404040 #404040 #fff"></div><div class="abs" style="left:1605.5px;top:949.6696428571429px;width:0;height:0;border-left:3px solid transparent;border-right:3px solid transparent;border-top:3px solid #000"></div>
<span class="t " style="left:1497px;top:945.6357142857144px;font-weight:bold;transform:scaleX(0.9);transform-origin:0 0;">2</span>
<span class="t " style="left:1557.5px;top:945.6357142857144px;font-weight:bold;transform:scaleX(0.9);transform-origin:0 0;">SDL</span>
<span class="t " style="left:1617px;top:945.6357142857144px;color:#1a3cff;font-weight:bold;transform:scaleX(0.682);transform-origin:0 0;">L-U</span>
<span class="t " style="left:1701.7271484375px;top:945.6357142857144px;font-weight:bold;transform:scaleX(0.9);transform-origin:0 0;">0.250</span>
<span class="t " style="left:1480.747265625px;top:959.0035714285715px;font-weight:bold;transform:scaleX(0.9);transform-origin:0 0;">4</span>
<div class="abs" style="left:1469px;top:957.8035714285714px;width:25px;height:11.767857142857142px;box-sizing:border-box;border-left:1px solid #fff;border-top:1px solid #fff"></div>
<div class="abs" style="left:1542px;top:958.3035714285714px;width:11px;height:11.267857142857142px;box-sizing:border-box;background:#f0f0f0;border:1px solid;border-color:#fff #404040 #404040 #fff"></div><div class="abs" style="left:1544.5px;top:962.4375px;width:0;height:0;border-left:3px solid transparent;border-right:3px solid transparent;border-top:3px solid #000"></div>
<div class="abs" style="left:1603px;top:958.3035714285714px;width:11px;height:11.267857142857142px;box-sizing:border-box;background:#f0f0f0;border:1px solid;border-color:#fff #404040 #404040 #fff"></div><div class="abs" style="left:1605.5px;top:962.4375px;width:0;height:0;border-left:3px solid transparent;border-right:3px solid transparent;border-top:3px solid #000"></div>
<span class="t " style="left:1497px;top:958.4035714285715px;font-weight:bold;transform:scaleX(0.9);transform-origin:0 0;">2</span>
<span class="t " style="left:1557.5px;top:958.4035714285715px;font-weight:bold;transform:scaleX(0.9);transform-origin:0 0;">LL</span>
<span class="t " style="left:1617px;top:958.4035714285715px;color:#1a3cff;font-weight:bold;transform:scaleX(0.682);transform-origin:0 0;">L-U</span>
<span class="t " style="left:1701.7271484375px;top:958.4035714285715px;font-weight:bold;transform:scaleX(0.9);transform-origin:0 0;">0.100</span>
<span class="t " style="left:1480.747265625px;top:971.7714285714286px;font-weight:bold;transform:scaleX(0.9);transform-origin:0 0;">5</span>
<div class="abs" style="left:1469px;top:970.5714285714286px;width:25px;height:11.767857142857142px;box-sizing:border-box;border-left:1px solid #fff;border-top:1px solid #fff"></div>
<div class="abs" style="left:1542px;top:971.0714285714286px;width:11px;height:11.267857142857142px;box-sizing:border-box;background:#f0f0f0;border:1px solid;border-color:#fff #404040 #404040 #fff"></div><div class="abs" style="left:1544.5px;top:975.2053571428571px;width:0;height:0;border-left:3px solid transparent;border-right:3px solid transparent;border-top:3px solid #000"></div>
<div class="abs" style="left:1603px;top:971.0714285714286px;width:11px;height:11.267857142857142px;box-sizing:border-box;background:#f0f0f0;border:1px solid;border-color:#fff #404040 #404040 #fff"></div><div class="abs" style="left:1605.5px;top:975.2053571428571px;width:0;height:0;border-left:3px solid transparent;border-right:3px solid transparent;border-top:3px solid #000"></div>
<span class="t " style="left:1497px;top:971.1714285714286px;font-weight:bold;transform:scaleX(0.9);transform-origin:0 0;">3</span>
<span class="t " style="left:1557.5px;top:971.1714285714286px;font-weight:bold;transform:scaleX(0.9);transform-origin:0 0;">SDL</span>
<span class="t " style="left:1617px;top:971.1714285714286px;color:#1a3cff;font-weight:bold;transform:scaleX(0.682);transform-origin:0 0;">L-U</span>
<span class="t " style="left:1701.7271484375px;top:971.1714285714286px;font-weight:bold;transform:scaleX(0.9);transform-origin:0 0;">0.250</span>
<span class="t " style="left:1480.747265625px;top:984.5392857142857px;font-weight:bold;transform:scaleX(0.9);transform-origin:0 0;">6</span>
<div class="abs" style="left:1469px;top:983.3392857142857px;width:25px;height:11.767857142857142px;box-sizing:border-box;border-left:1px solid #fff;border-top:1px solid #fff"></div>
<div class="abs" style="left:1542px;top:983.8392857142857px;width:11px;height:11.267857142857142px;box-sizing:border-box;background:#f0f0f0;border:1px solid;border-color:#fff #404040 #404040 #fff"></div><div class="abs" style="left:1544.5px;top:987.9732142857142px;width:0;height:0;border-left:3px solid transparent;border-right:3px solid transparent;border-top:3px solid #000"></div>
<div class="abs" style="left:1603px;top:983.8392857142857px;width:11px;height:11.267857142857142px;box-sizing:border-box;background:#f0f0f0;border:1px solid;border-color:#fff #404040 #404040 #fff"></div><div class="abs" style="left:1605.5px;top:987.9732142857142px;width:0;height:0;border-left:3px solid transparent;border-right:3px solid transparent;border-top:3px solid #000"></div>
<span class="t " style="left:1497px;top:983.9392857142857px;font-weight:bold;transform:scaleX(0.9);transform-origin:0 0;">3</span>
<span class="t " style="left:1557.5px;top:983.9392857142857px;font-weight:bold;transform:scaleX(0.9);transform-origin:0 0;">LL</span>
<span class="t " style="left:1617px;top:983.9392857142857px;color:#1a3cff;font-weight:bold;transform:scaleX(0.682);transform-origin:0 0;">L-U</span>
<span class="t " style="left:1702.273828125px;top:983.9392857142857px;font-weight:bold;transform:scaleX(0.9);transform-origin:0 0;">0.110</span>
<span class="t " style="left:1480.747265625px;top:997.3071428571429px;font-weight:bold;transform:scaleX(0.9);transform-origin:0 0;">7</span>
<div class="abs" style="left:1469px;top:996.1071428571429px;width:25px;height:11.767857142857142px;box-sizing:border-box;border-left:1px solid #fff;border-top:1px solid #fff"></div>
<div class="abs" style="left:1542px;top:996.6071428571429px;width:11px;height:11.267857142857142px;box-sizing:border-box;background:#f0f0f0;border:1px solid;border-color:#fff #404040 #404040 #fff"></div><div class="abs" style="left:1544.5px;top:1000.7410714285714px;width:0;height:0;border-left:3px solid transparent;border-right:3px solid transparent;border-top:3px solid #000"></div>
<div class="abs" style="left:1603px;top:996.6071428571429px;width:11px;height:11.267857142857142px;box-sizing:border-box;background:#f0f0f0;border:1px solid;border-color:#fff #404040 #404040 #fff"></div><div class="abs" style="left:1605.5px;top:1000.7410714285714px;width:0;height:0;border-left:3px solid transparent;border-right:3px solid transparent;border-top:3px solid #000"></div>
<span class="t " style="left:1497px;top:996.7071428571429px;font-weight:bold;transform:scaleX(0.9);transform-origin:0 0;">CR</span>
<span class="t " style="left:1557.5px;top:996.7071428571429px;font-weight:bold;transform:scaleX(0.9);transform-origin:0 0;">SDL</span>
<span class="t " style="left:1617px;top:996.7071428571429px;color:#1a3cff;font-weight:bold;transform:scaleX(0.682);transform-origin:0 0;">L-U</span>
<span class="t " style="left:1701.7271484375px;top:996.7071428571429px;font-weight:bold;transform:scaleX(0.9);transform-origin:0 0;">0.250</span>
<span class="t " style="left:1480.747265625px;top:1010.075px;font-weight:bold;transform:scaleX(0.9);transform-origin:0 0;">8</span>
<div class="abs" style="left:1469px;top:1008.875px;width:25px;height:11.767857142857142px;box-sizing:border-box;border-left:1px solid #fff;border-top:1px solid #fff"></div>
<div class="abs" style="left:1542px;top:1009.375px;width:11px;height:11.267857142857142px;box-sizing:border-box;background:#f0f0f0;border:1px solid;border-color:#fff #404040 #404040 #fff"></div><div class="abs" style="left:1544.5px;top:1013.5089285714286px;width:0;height:0;border-left:3px solid transparent;border-right:3px solid transparent;border-top:3px solid #000"></div>
<div class="abs" style="left:1603px;top:1009.375px;width:11px;height:11.267857142857142px;box-sizing:border-box;background:#f0f0f0;border:1px solid;border-color:#fff #404040 #404040 #fff"></div><div class="abs" style="left:1605.5px;top:1013.5089285714286px;width:0;height:0;border-left:3px solid transparent;border-right:3px solid transparent;border-top:3px solid #000"></div>
<span class="t " style="left:1497px;top:1009.475px;font-weight:bold;transform:scaleX(0.9);transform-origin:0 0;">CR</span>
<span class="t " style="left:1557.5px;top:1009.475px;font-weight:bold;transform:scaleX(0.9);transform-origin:0 0;">LL</span>
<span class="t " style="left:1617px;top:1009.475px;color:#1a3cff;font-weight:bold;transform:scaleX(0.682);transform-origin:0 0;">L-U</span>
<span class="t " style="left:1702.273828125px;top:1009.475px;font-weight:bold;transform:scaleX(0.9);transform-origin:0 0;">0.110</span>
<span class="t " style="left:1480.747265625px;top:1022.8428571428572px;font-weight:bold;transform:scaleX(0.9);transform-origin:0 0;">9</span>
<div class="abs" style="left:1469px;top:1021.6428571428571px;width:25px;height:11.767857142857142px;box-sizing:border-box;border-left:1px solid #fff;border-top:1px solid #fff"></div>
<div class="abs" style="left:1542px;top:1022.1428571428571px;width:11px;height:11.267857142857142px;box-sizing:border-box;background:#f0f0f0;border:1px solid;border-color:#fff #404040 #404040 #fff"></div><div class="abs" style="left:1544.5px;top:1026.2767857142858px;width:0;height:0;border-left:3px solid transparent;border-right:3px solid transparent;border-top:3px solid #000"></div>
<div class="abs" style="left:1603px;top:1022.1428571428571px;width:11px;height:11.267857142857142px;box-sizing:border-box;background:#f0f0f0;border:1px solid;border-color:#fff #404040 #404040 #fff"></div><div class="abs" style="left:1605.5px;top:1026.2767857142858px;width:0;height:0;border-left:3px solid transparent;border-right:3px solid transparent;border-top:3px solid #000"></div>
<span class="t " style="left:1477.99453125px;top:1035.610714285714px;font-weight:bold;transform:scaleX(0.9);transform-origin:0 0;">10</span>
<div class="abs" style="left:1469px;top:1034.4107142857142px;width:25px;height:11.767857142857142px;box-sizing:border-box;border-left:1px solid #fff;border-top:1px solid #fff"></div>
<div class="abs" style="left:1542px;top:1034.9107142857142px;width:11px;height:11.267857142857142px;box-sizing:border-box;background:#f0f0f0;border:1px solid;border-color:#fff #404040 #404040 #fff"></div><div class="abs" style="left:1544.5px;top:1039.044642857143px;width:0;height:0;border-left:3px solid transparent;border-right:3px solid transparent;border-top:3px solid #000"></div>
<div class="abs" style="left:1603px;top:1034.9107142857142px;width:11px;height:11.267857142857142px;box-sizing:border-box;background:#f0f0f0;border:1px solid;border-color:#fff #404040 #404040 #fff"></div><div class="abs" style="left:1605.5px;top:1039.044642857143px;width:0;height:0;border-left:3px solid transparent;border-right:3px solid transparent;border-top:3px solid #000"></div>
<span class="t " style="left:1478.26787109375px;top:1048.3785714285711px;font-weight:bold;transform:scaleX(0.9);transform-origin:0 0;">11</span>
<div class="abs" style="left:1469px;top:1047.1785714285713px;width:25px;height:11.767857142857142px;box-sizing:border-box;border-left:1px solid #fff;border-top:1px solid #fff"></div>
<div class="abs" style="left:1542px;top:1047.6785714285713px;width:11px;height:11.267857142857142px;box-sizing:border-box;background:#f0f0f0;border:1px solid;border-color:#fff #404040 #404040 #fff"></div><div class="abs" style="left:1544.5px;top:1051.8125px;width:0;height:0;border-left:3px solid transparent;border-right:3px solid transparent;border-top:3px solid #000"></div>
<div class="abs" style="left:1603px;top:1047.6785714285713px;width:11px;height:11.267857142857142px;box-sizing:border-box;background:#f0f0f0;border:1px solid;border-color:#fff #404040 #404040 #fff"></div><div class="abs" style="left:1605.5px;top:1051.8125px;width:0;height:0;border-left:3px solid transparent;border-right:3px solid transparent;border-top:3px solid #000"></div>
<span class="t " style="left:1477.99453125px;top:1061.1464285714283px;font-weight:bold;transform:scaleX(0.9);transform-origin:0 0;">12</span>
<div class="abs" style="left:1469px;top:1059.9464285714284px;width:25px;height:11.767857142857142px;box-sizing:border-box;border-left:1px solid #fff;border-top:1px solid #fff"></div>
<div class="abs" style="left:1542px;top:1060.4464285714284px;width:11px;height:11.267857142857142px;box-sizing:border-box;background:#f0f0f0;border:1px solid;border-color:#fff #404040 #404040 #fff"></div><div class="abs" style="left:1544.5px;top:1064.580357142857px;width:0;height:0;border-left:3px solid transparent;border-right:3px solid transparent;border-top:3px solid #000"></div>
<div class="abs" style="left:1603px;top:1060.4464285714284px;width:11px;height:11.267857142857142px;box-sizing:border-box;background:#f0f0f0;border:1px solid;border-color:#fff #404040 #404040 #fff"></div><div class="abs" style="left:1605.5px;top:1064.580357142857px;width:0;height:0;border-left:3px solid transparent;border-right:3px solid transparent;border-top:3px solid #000"></div>
<span class="t " style="left:1477.99453125px;top:1073.9142857142856px;font-weight:bold;transform:scaleX(0.9);transform-origin:0 0;">13</span>
<div class="abs" style="left:1469px;top:1072.7142857142858px;width:25px;height:11.767857142857142px;box-sizing:border-box;border-left:1px solid #fff;border-top:1px solid #fff"></div>
<div class="abs" style="left:1542px;top:1073.2142857142858px;width:11px;height:11.267857142857142px;box-sizing:border-box;background:#f0f0f0;border:1px solid;border-color:#fff #404040 #404040 #fff"></div><div class="abs" style="left:1544.5px;top:1077.3482142857144px;width:0;height:0;border-left:3px solid transparent;border-right:3px solid transparent;border-top:3px solid #000"></div>
<div class="abs" style="left:1603px;top:1073.2142857142858px;width:11px;height:11.267857142857142px;box-sizing:border-box;background:#f0f0f0;border:1px solid;border-color:#fff #404040 #404040 #fff"></div><div class="abs" style="left:1605.5px;top:1077.3482142857144px;width:0;height:0;border-left:3px solid transparent;border-right:3px solid transparent;border-top:3px solid #000"></div>
<span class="t " style="left:1477.99453125px;top:1086.6821428571427px;font-weight:bold;transform:scaleX(0.9);transform-origin:0 0;">14</span>
<div class="abs" style="left:1469px;top:1085.482142857143px;width:25px;height:11.767857142857142px;box-sizing:border-box;border-left:1px solid #fff;border-top:1px solid #fff"></div>
<div class="abs" style="left:1542px;top:1085.982142857143px;width:11px;height:11.267857142857142px;box-sizing:border-box;background:#f0f0f0;border:1px solid;border-color:#fff #404040 #404040 #fff"></div><div class="abs" style="left:1544.5px;top:1090.1160714285716px;width:0;height:0;border-left:3px solid transparent;border-right:3px solid transparent;border-top:3px solid #000"></div>
<div class="abs" style="left:1603px;top:1085.982142857143px;width:11px;height:11.267857142857142px;box-sizing:border-box;background:#f0f0f0;border:1px solid;border-color:#fff #404040 #404040 #fff"></div><div class="abs" style="left:1605.5px;top:1090.1160714285716px;width:0;height:0;border-left:3px solid transparent;border-right:3px solid transparent;border-top:3px solid #000"></div>
<div class="abs" style="left:1495px;top:920px;width:59.500px;height:11.767857142857142px;box-sizing:border-box;border:1px solid #000"></div>
<div class="abs" style="left:2227px;top:907px;width:14px;height:191.25px;background:#f4f4f4;"></div>
<div class="abs" style="left:2227px;top:907px;width:14px;height:12px;box-sizing:border-box;border:1px solid;border-color:#fff #a0a0a0 #a0a0a0 #fff;background:#f0f0f0"></div><div class="abs" style="left:2231px;top:911px;width:0;height:0;border-left:3px solid transparent;border-right:3px solid transparent;border-bottom:3.500px solid #000"></div>
<div class="abs" style="left:2227px;top:919.500px;width:14px;height:6px;box-sizing:border-box;border:1px solid;border-color:#fff #a0a0a0 #a0a0a0 #fff;background:#f0f0f0"></div>
<div class="abs" style="left:2227px;top:1086px;width:14px;height:12px;box-sizing:border-box;border:1px solid;border-color:#fff #a0a0a0 #a0a0a0 #fff;background:#f0f0f0"></div><div class="abs" style="left:2231px;top:1090.500px;width:0;height:0;border-left:3px solid transparent;border-right:3px solid transparent;border-top:3.500px solid #000"></div>
<div class="abs" style="left:1703.25px;top:1106.25px;width:63.75px;height:25.0px;box-sizing:border-box;border:1px solid;border-color:#fff #696969 #696969 #fff;box-shadow:inset -1px -1px 0 #a0a0a0;background:#f0f0f0"></div>
<span class="t " style="left:1717.568671875px;top:1112.25px;transform:scaleX(0.87);transform-origin:0 0;">&lt;&lt; <u>B</u>ack</span>
<div class="abs" style="left:1782.5px;top:1106.25px;width:63.5px;height:25.0px;box-sizing:border-box;border:1px solid;border-color:#fff #696969 #696969 #fff;box-shadow:inset -1px -1px 0 #a0a0a0;background:#f0f0f0"></div>
<span class="t " style="left:1799.35634765625px;top:1112.25px;transform:scaleX(0.87);transform-origin:0 0;"><u>C</u>ancel</span>
<div class="abs" style="left:1861px;top:1106.25px;width:63.5px;height:25.0px;box-sizing:border-box;border:1px solid;border-color:#fff #696969 #696969 #fff;box-shadow:inset -1px -1px 0 #a0a0a0;background:#f0f0f0"></div>
<span class="t " style="left:1885.83587890625px;top:1112.25px;transform:scaleX(0.87);transform-origin:0 0;"><u>O</u>K</span>
<div class="abs" style="left:1940px;top:1106.25px;width:63.5px;height:25.0px;box-sizing:border-box;border:1px solid #000;background:#f0f0f0"></div>
<div class="abs" style="left:1941px;top:1107.25px;width:61.5px;height:23.0px;box-sizing:border-box;border:1px solid;border-color:#fff #696969 #696969 #fff;box-shadow:inset -1px -1px 0 #a0a0a0"></div>
<span class="t " style="left:1954.993154296875px;top:1112.25px;transform:scaleX(0.87);transform-origin:0 0;"><u>N</u>ext &gt;&gt;</span></div></div>
</body></html>
